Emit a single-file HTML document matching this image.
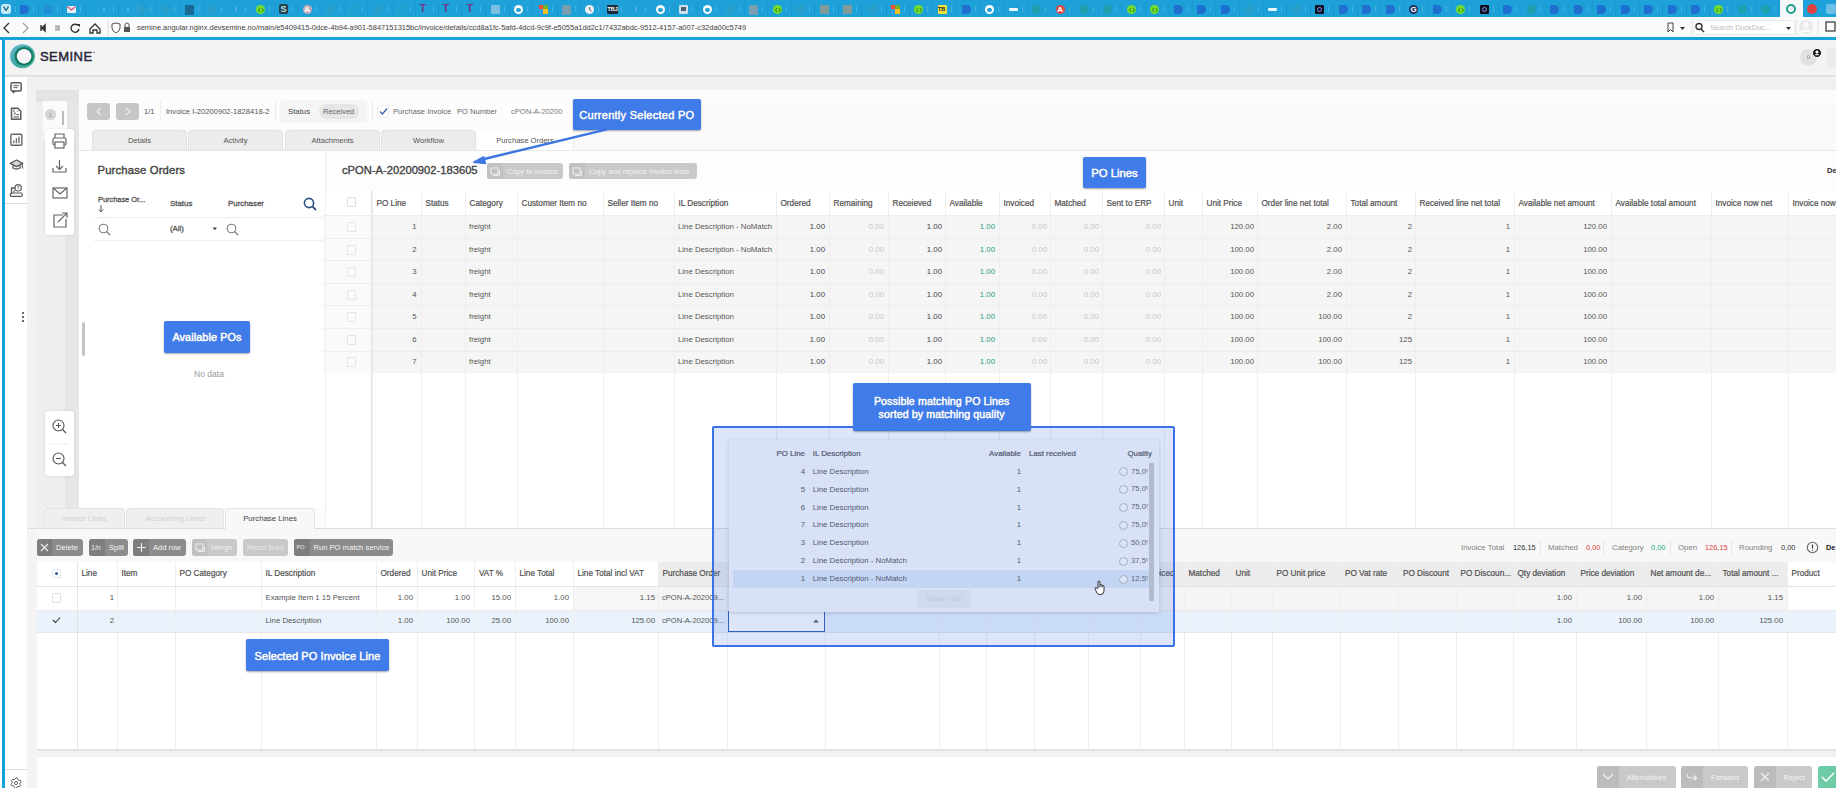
<!DOCTYPE html><html><head><meta charset="utf-8"><style>
*{margin:0;padding:0;box-sizing:border-box}
html,body{width:1836px;height:788px;overflow:hidden;background:#fff;font-family:"Liberation Sans",sans-serif;position:relative}
.a{position:absolute}
.t{position:absolute;white-space:nowrap;line-height:1;}
</style></head><body><div class="a" style="left:0px;top:0px;width:1836px;height:17px;background:#1ea0d8"></div>
<div class="a" style="left:1px;top:3.5px;width:10px;height:10px;background:#c5e9f8;border-radius:3px"><svg class="a" style="left:2px;top:2.5px" width="6" height="5"><path d="M0.5 0.5 L3 4.5 L5.5 0.5" stroke="#1a6f80" stroke-width="1.4" fill="none"/></svg></div>
<div class="a" style="left:15px;top:6px;width:1.3px;height:5.5px;background:#74c4e8;opacity:0.45"></div>
<div class="a" style="left:20px;top:1px;width:1px;height:15px;background:#1b92cc;opacity:0.5"></div>
<div class="a" style="left:19.5px;top:4.5px;width:9px;height:9px;background:#1f6fd0;border-radius:1px 5px 5px 1px;opacity:1"></div>
<div class="a" style="left:33px;top:6px;width:1.3px;height:5.5px;background:#74c4e8;opacity:0.45"></div>
<div class="a" style="left:38px;top:1px;width:1px;height:15px;background:#1b92cc;opacity:0.5"></div>
<div class="a" style="left:43.5px;top:4.5px;width:9px;height:9px;background:#1f6fd0;border-radius:1px 5px 5px 1px;opacity:0.35"></div>
<div class="a" style="left:57px;top:6px;width:1.3px;height:5.5px;background:#74c4e8;opacity:0.45"></div>
<div class="a" style="left:62px;top:1px;width:1px;height:15px;background:#1b92cc;opacity:0.5"></div>
<div class="a" style="left:66.5px;top:5.5px;width:9px;height:7px;background:#e8eef6;border-radius:1px"><svg class="a" style="left:0;top:0" width="9" height="7"><path d="M0.5 0.5 L4.5 4 L8.5 0.5" stroke="#d05070" stroke-width="1.2" fill="none"/></svg></div>
<div class="a" style="left:80px;top:6px;width:1.3px;height:5.5px;background:#74c4e8;opacity:0.45"></div>
<div class="a" style="left:85px;top:1px;width:1px;height:15px;background:#1b92cc;opacity:0.5"></div>
<div class="a" style="left:103px;top:6.5px;width:2px;height:5px;background:#6cc0e6;opacity:0.5"></div>
<div class="a" style="left:113px;top:6px;width:1.3px;height:5.5px;background:#74c4e8;opacity:0.45"></div>
<div class="a" style="left:118px;top:1px;width:1px;height:15px;background:#1b92cc;opacity:0.5"></div>
<div class="a" style="left:127px;top:6.5px;width:2px;height:5px;background:#6cc0e6;opacity:0.5"></div>
<div class="a" style="left:137px;top:6px;width:1.3px;height:5.5px;background:#74c4e8;opacity:0.45"></div>
<div class="a" style="left:142px;top:1px;width:1px;height:15px;background:#1b92cc;opacity:0.5"></div>
<div class="a" style="left:136.5px;top:4.5px;width:9px;height:9px;background:#3f9fb0;border-radius:50%;opacity:0.35"></div>
<div class="a" style="left:150px;top:6px;width:1.3px;height:5.5px;background:#74c4e8;opacity:0.45"></div>
<div class="a" style="left:155px;top:1px;width:1px;height:15px;background:#1b92cc;opacity:0.5"></div>
<div class="a" style="left:160.5px;top:4.5px;width:9px;height:9px;background:#3f9fb0;border-radius:50%;opacity:0.35"></div>
<div class="a" style="left:174px;top:6px;width:1.3px;height:5.5px;background:#74c4e8;opacity:0.45"></div>
<div class="a" style="left:179px;top:1px;width:1px;height:15px;background:#1b92cc;opacity:0.5"></div>
<div class="a" style="left:184.5px;top:4.5px;width:9px;height:10px;background:#16648c;border-radius:1px;opacity:0.9"></div>
<div class="a" style="left:198px;top:6px;width:1.3px;height:5.5px;background:#74c4e8;opacity:0.45"></div>
<div class="a" style="left:203px;top:1px;width:1px;height:15px;background:#1b92cc;opacity:0.5"></div>
<div class="a" style="left:207.5px;top:4.5px;width:9px;height:9px;background:#3f9fb0;border-radius:50%;opacity:0.35"></div>
<div class="a" style="left:221px;top:6px;width:1.3px;height:5.5px;background:#74c4e8;opacity:0.45"></div>
<div class="a" style="left:226px;top:1px;width:1px;height:15px;background:#1b92cc;opacity:0.5"></div>
<div class="a" style="left:235px;top:6.5px;width:2px;height:5px;background:#6cc0e6;opacity:0.5"></div>
<div class="a" style="left:245px;top:6px;width:1.3px;height:5.5px;background:#74c4e8;opacity:0.45"></div>
<div class="a" style="left:250px;top:1px;width:1px;height:15px;background:#1b92cc;opacity:0.5"></div>
<div class="a" style="left:255.5px;top:4.5px;width:9.5px;height:9.5px;background:#72dc2c;border-radius:50%"><svg class="a" style="left:2px;top:2px" width="6" height="6"><path d="M2 1 L0.5 3 L2 5 M4 1 L5.5 3 L4 5" stroke="#2a7a20" stroke-width="0.9" fill="none"/></svg></div>
<div class="a" style="left:269px;top:6px;width:1.3px;height:5.5px;background:#74c4e8;opacity:0.45"></div>
<div class="a" style="left:274px;top:1px;width:1px;height:15px;background:#1b92cc;opacity:0.5"></div>
<div class="a" style="left:278.5px;top:4.0px;width:9.5px;height:10px;background:#26404e;border-radius:2px"><div class="t" style="left:2px;top:1px;font-size:9px;font-weight:bold;color:#b8e8e0">S</div></div>
<div class="a" style="left:292px;top:6px;width:1.3px;height:5.5px;background:#74c4e8;opacity:0.45"></div>
<div class="a" style="left:297px;top:1px;width:1px;height:15px;background:#1b92cc;opacity:0.5"></div>
<div class="a" style="left:302.5px;top:4.5px;width:9.5px;height:9.5px;background:#c9a9b8;border-radius:50%"><div class="t" style="left:1.7px;top:1px;font-size:8px;font-weight:bold;color:#fff">A</div></div>
<div class="a" style="left:316px;top:6px;width:1.3px;height:5.5px;background:#74c4e8;opacity:0.45"></div>
<div class="a" style="left:321px;top:1px;width:1px;height:15px;background:#1b92cc;opacity:0.5"></div>
<div class="a" style="left:325.5px;top:4.5px;width:9px;height:9px;background:#3f9fb0;border-radius:50%;opacity:0.35"></div>
<div class="a" style="left:339px;top:6px;width:1.3px;height:5.5px;background:#74c4e8;opacity:0.45"></div>
<div class="a" style="left:344px;top:1px;width:1px;height:15px;background:#1b92cc;opacity:0.5"></div>
<div class="a" style="left:348.5px;top:4.5px;width:9px;height:9px;border:1.5px solid #40b8a0;border-radius:50%;opacity:0.45"></div>
<div class="a" style="left:362px;top:6px;width:1.3px;height:5.5px;background:#74c4e8;opacity:0.45"></div>
<div class="a" style="left:367px;top:1px;width:1px;height:15px;background:#1b92cc;opacity:0.5"></div>
<div class="a" style="left:373.5px;top:4.5px;width:9px;height:9px;background:#3f9fb0;border-radius:50%;opacity:0.35"></div>
<div class="a" style="left:387px;top:6px;width:1.3px;height:5.5px;background:#74c4e8;opacity:0.45"></div>
<div class="a" style="left:392px;top:1px;width:1px;height:15px;background:#1b92cc;opacity:0.5"></div>
<div class="a" style="left:396.5px;top:4.5px;width:9px;height:9px;border:1.5px solid #40b8a0;border-radius:50%;opacity:0.45"></div>
<div class="a" style="left:410px;top:6px;width:1.3px;height:5.5px;background:#74c4e8;opacity:0.45"></div>
<div class="a" style="left:415px;top:1px;width:1px;height:15px;background:#1b92cc;opacity:0.5"></div>
<div class="t" style="left:419.5px;top:3px;font-size:11px;font-weight:bold;color:#6a3a8a">T</div>
<div class="a" style="left:433px;top:6px;width:1.3px;height:5.5px;background:#74c4e8;opacity:0.45"></div>
<div class="a" style="left:438px;top:1px;width:1px;height:15px;background:#1b92cc;opacity:0.5"></div>
<div class="t" style="left:442.5px;top:3px;font-size:11px;font-weight:bold;color:#6a3a8a">T</div>
<div class="a" style="left:456px;top:6px;width:1.3px;height:5.5px;background:#74c4e8;opacity:0.45"></div>
<div class="a" style="left:461px;top:1px;width:1px;height:15px;background:#1b92cc;opacity:0.5"></div>
<div class="t" style="left:466.5px;top:3px;font-size:11px;font-weight:bold;color:#6a3a8a">T</div>
<div class="a" style="left:480px;top:6px;width:1.3px;height:5.5px;background:#74c4e8;opacity:0.45"></div>
<div class="a" style="left:485px;top:1px;width:1px;height:15px;background:#1b92cc;opacity:0.5"></div>
<div class="a" style="left:490.5px;top:4.5px;width:9px;height:9px;background:#b8d4e4;border-radius:1px;opacity:0.6"></div>
<div class="a" style="left:504px;top:6px;width:1.3px;height:5.5px;background:#74c4e8;opacity:0.45"></div>
<div class="a" style="left:509px;top:1px;width:1px;height:15px;background:#1b92cc;opacity:0.5"></div>
<div class="a" style="left:513.5px;top:4.5px;width:9.5px;height:9.5px;background:#fafafa;border-radius:50%"><div class="a" style="left:2.5px;top:3px;width:4.5px;height:4px;background:#1ea0d8;border-radius:50%"></div></div>
<div class="a" style="left:527px;top:6px;width:1.3px;height:5.5px;background:#74c4e8;opacity:0.45"></div>
<div class="a" style="left:532px;top:1px;width:1px;height:15px;background:#1b92cc;opacity:0.5"></div>
<div class="a" style="left:538.5px;top:4.5px;width:4.5px;height:4.5px;background:#f05030"></div>
<div class="a" style="left:543.0px;top:4.5px;width:4.5px;height:4.5px;background:#70b030"></div>
<div class="a" style="left:538.5px;top:9.0px;width:4.5px;height:4.5px;background:#30a0e0"></div>
<div class="a" style="left:543.0px;top:9.0px;width:4.5px;height:4.5px;background:#f8c020"></div>
<div class="a" style="left:552px;top:6px;width:1.3px;height:5.5px;background:#74c4e8;opacity:0.45"></div>
<div class="a" style="left:557px;top:1px;width:1px;height:15px;background:#1b92cc;opacity:0.5"></div>
<div class="a" style="left:561.5px;top:4.5px;width:9px;height:10px;background:#8c9ca8;border-radius:1px;opacity:0.8"></div>
<div class="a" style="left:575px;top:6px;width:1.3px;height:5.5px;background:#74c4e8;opacity:0.45"></div>
<div class="a" style="left:580px;top:1px;width:1px;height:15px;background:#1b92cc;opacity:0.5"></div>
<div class="a" style="left:584.5px;top:4.5px;width:9.5px;height:9.5px;background:#eef2f5;border-radius:50%"><svg class="a" style="left:0;top:0" width="9" height="9"><path d="M4.7 2 V4.7 L6.5 6" stroke="#445" stroke-width="0.9" fill="none"/></svg></div>
<div class="a" style="left:598px;top:6px;width:1.3px;height:5.5px;background:#74c4e8;opacity:0.45"></div>
<div class="a" style="left:603px;top:1px;width:1px;height:15px;background:#1b92cc;opacity:0.5"></div>
<div class="a" style="left:606.5px;top:4.5px;width:11px;height:9.5px;background:#1b2a3a;border-radius:1px"><div class="t" style="left:1px;top:2px;font-size:5.5px;font-weight:bold;color:#fff">TBJ</div></div>
<div class="a" style="left:621px;top:6px;width:1.3px;height:5.5px;background:#74c4e8;opacity:0.45"></div>
<div class="a" style="left:626px;top:1px;width:1px;height:15px;background:#1b92cc;opacity:0.5"></div>
<div class="a" style="left:635px;top:6.5px;width:2px;height:5px;background:#6cc0e6;opacity:0.5"></div>
<div class="a" style="left:645px;top:6px;width:1.3px;height:5.5px;background:#74c4e8;opacity:0.45"></div>
<div class="a" style="left:650px;top:1px;width:1px;height:15px;background:#1b92cc;opacity:0.5"></div>
<div class="a" style="left:655.5px;top:4.5px;width:9.5px;height:9.5px;background:#fafafa;border-radius:50%"><div class="a" style="left:2.5px;top:3px;width:4.5px;height:4px;background:#1ea0d8;border-radius:50%"></div></div>
<div class="a" style="left:669px;top:6px;width:1.3px;height:5.5px;background:#74c4e8;opacity:0.45"></div>
<div class="a" style="left:674px;top:1px;width:1px;height:15px;background:#1b92cc;opacity:0.5"></div>
<div class="a" style="left:678.5px;top:4.5px;width:9.5px;height:9px;background:#dfe8ef;border-radius:1px;opacity:0.9"><div class="a" style="left:2px;top:2px;width:5px;height:4px;background:#556"></div></div>
<div class="a" style="left:692px;top:6px;width:1.3px;height:5.5px;background:#74c4e8;opacity:0.45"></div>
<div class="a" style="left:697px;top:1px;width:1px;height:15px;background:#1b92cc;opacity:0.5"></div>
<div class="a" style="left:702.5px;top:4.5px;width:9.5px;height:9.5px;background:#fafafa;border-radius:50%"><div class="a" style="left:2.5px;top:3px;width:4.5px;height:4px;background:#1ea0d8;border-radius:50%"></div></div>
<div class="a" style="left:716px;top:6px;width:1.3px;height:5.5px;background:#74c4e8;opacity:0.45"></div>
<div class="a" style="left:721px;top:1px;width:1px;height:15px;background:#1b92cc;opacity:0.5"></div>
<div class="a" style="left:725.5px;top:4.5px;width:9px;height:9px;background:#3f9fb0;border-radius:50%;opacity:0.35"></div>
<div class="a" style="left:739px;top:6px;width:1.3px;height:5.5px;background:#74c4e8;opacity:0.45"></div>
<div class="a" style="left:744px;top:1px;width:1px;height:15px;background:#1b92cc;opacity:0.5"></div>
<div class="a" style="left:748.5px;top:4.5px;width:9px;height:10px;background:#8c9ca8;border-radius:1px;opacity:0.8"></div>
<div class="a" style="left:762px;top:6px;width:1.3px;height:5.5px;background:#74c4e8;opacity:0.45"></div>
<div class="a" style="left:767px;top:1px;width:1px;height:15px;background:#1b92cc;opacity:0.5"></div>
<div class="a" style="left:772.5px;top:4.5px;width:9.5px;height:9.5px;background:#72dc2c;border-radius:50%"><svg class="a" style="left:2px;top:2px" width="6" height="6"><path d="M2 1 L0.5 3 L2 5 M4 1 L5.5 3 L4 5" stroke="#2a7a20" stroke-width="0.9" fill="none"/></svg></div>
<div class="a" style="left:786px;top:6px;width:1.3px;height:5.5px;background:#74c4e8;opacity:0.45"></div>
<div class="a" style="left:791px;top:1px;width:1px;height:15px;background:#1b92cc;opacity:0.5"></div>
<div class="a" style="left:795.5px;top:4.5px;width:9px;height:9px;background:#3f9fb0;border-radius:50%;opacity:0.35"></div>
<div class="a" style="left:809px;top:6px;width:1.3px;height:5.5px;background:#74c4e8;opacity:0.45"></div>
<div class="a" style="left:814px;top:1px;width:1px;height:15px;background:#1b92cc;opacity:0.5"></div>
<div class="a" style="left:819.5px;top:4.5px;width:9px;height:9px;background:#a89a80;opacity:0.7"></div>
<div class="a" style="left:833px;top:6px;width:1.3px;height:5.5px;background:#74c4e8;opacity:0.45"></div>
<div class="a" style="left:838px;top:1px;width:1px;height:15px;background:#1b92cc;opacity:0.5"></div>
<div class="a" style="left:842.5px;top:4.5px;width:9px;height:9px;background:#a89a80;opacity:0.7"></div>
<div class="a" style="left:856px;top:6px;width:1.3px;height:5.5px;background:#74c4e8;opacity:0.45"></div>
<div class="a" style="left:861px;top:1px;width:1px;height:15px;background:#1b92cc;opacity:0.5"></div>
<div class="a" style="left:867.5px;top:4.5px;width:9px;height:9px;background:#3f9fb0;border-radius:50%;opacity:0.35"></div>
<div class="a" style="left:881px;top:6px;width:1.3px;height:5.5px;background:#74c4e8;opacity:0.45"></div>
<div class="a" style="left:886px;top:1px;width:1px;height:15px;background:#1b92cc;opacity:0.5"></div>
<div class="a" style="left:890.5px;top:4.5px;width:4.5px;height:4.5px;background:#f05030"></div>
<div class="a" style="left:895.0px;top:4.5px;width:4.5px;height:4.5px;background:#70b030"></div>
<div class="a" style="left:890.5px;top:9.0px;width:4.5px;height:4.5px;background:#30a0e0"></div>
<div class="a" style="left:895.0px;top:9.0px;width:4.5px;height:4.5px;background:#f8c020"></div>
<div class="a" style="left:904px;top:6px;width:1.3px;height:5.5px;background:#74c4e8;opacity:0.45"></div>
<div class="a" style="left:909px;top:1px;width:1px;height:15px;background:#1b92cc;opacity:0.5"></div>
<div class="a" style="left:913.5px;top:4.5px;width:9.5px;height:9.5px;background:#72dc2c;border-radius:50%"><svg class="a" style="left:2px;top:2px" width="6" height="6"><path d="M2 1 L0.5 3 L2 5 M4 1 L5.5 3 L4 5" stroke="#2a7a20" stroke-width="0.9" fill="none"/></svg></div>
<div class="a" style="left:927px;top:6px;width:1.3px;height:5.5px;background:#74c4e8;opacity:0.45"></div>
<div class="a" style="left:932px;top:1px;width:1px;height:15px;background:#1b92cc;opacity:0.5"></div>
<div class="a" style="left:937.5px;top:4.5px;width:9.5px;height:9.5px;background:#f0e040;border-radius:1px"><div class="t" style="left:0.5px;top:2.5px;font-size:5.5px;font-weight:bold;color:#222">TB</div></div>
<div class="a" style="left:951px;top:6px;width:1.3px;height:5.5px;background:#74c4e8;opacity:0.45"></div>
<div class="a" style="left:956px;top:1px;width:1px;height:15px;background:#1b92cc;opacity:0.5"></div>
<div class="a" style="left:961.5px;top:4.5px;width:9px;height:9px;background:#1f6fd0;border-radius:1px 5px 5px 1px;opacity:1"></div>
<div class="a" style="left:975px;top:6px;width:1.3px;height:5.5px;background:#74c4e8;opacity:0.45"></div>
<div class="a" style="left:980px;top:1px;width:1px;height:15px;background:#1b92cc;opacity:0.5"></div>
<div class="a" style="left:984.5px;top:4.5px;width:9.5px;height:9.5px;background:#fafafa;border-radius:50%"><div class="a" style="left:2.5px;top:3px;width:4.5px;height:4px;background:#1ea0d8;border-radius:50%"></div></div>
<div class="a" style="left:998px;top:6px;width:1.3px;height:5.5px;background:#74c4e8;opacity:0.45"></div>
<div class="a" style="left:1003px;top:1px;width:1px;height:15px;background:#1b92cc;opacity:0.5"></div>
<div class="a" style="left:1008.5px;top:7.5px;width:9.5px;height:3.5px;background:#eaf8ff;border-radius:1px"></div>
<div class="a" style="left:1022px;top:6px;width:1.3px;height:5.5px;background:#74c4e8;opacity:0.45"></div>
<div class="a" style="left:1027px;top:1px;width:1px;height:15px;background:#1b92cc;opacity:0.5"></div>
<div class="a" style="left:1031.5px;top:4.5px;width:9px;height:9px;background:#1fa08a;border-radius:50%;opacity:0.55"></div>
<div class="a" style="left:1045px;top:6px;width:1.3px;height:5.5px;background:#74c4e8;opacity:0.45"></div>
<div class="a" style="left:1050px;top:1px;width:1px;height:15px;background:#1b92cc;opacity:0.5"></div>
<div class="a" style="left:1055.5px;top:4.5px;width:9.5px;height:9.5px;background:#e04848;border-radius:50%"><div class="t" style="left:1.7px;top:1px;font-size:8px;font-weight:bold;color:#fff">A</div></div>
<div class="a" style="left:1069px;top:6px;width:1.3px;height:5.5px;background:#74c4e8;opacity:0.45"></div>
<div class="a" style="left:1074px;top:1px;width:1px;height:15px;background:#1b92cc;opacity:0.5"></div>
<div class="a" style="left:1079.5px;top:4.5px;width:9px;height:9px;background:#1fa08a;border-radius:50%;opacity:0.55"></div>
<div class="a" style="left:1093px;top:6px;width:1.3px;height:5.5px;background:#74c4e8;opacity:0.45"></div>
<div class="a" style="left:1098px;top:1px;width:1px;height:15px;background:#1b92cc;opacity:0.5"></div>
<div class="a" style="left:1102.5px;top:4.5px;width:9px;height:9px;background:#1fa08a;border-radius:50%;opacity:0.55"></div>
<div class="a" style="left:1116px;top:6px;width:1.3px;height:5.5px;background:#74c4e8;opacity:0.45"></div>
<div class="a" style="left:1121px;top:1px;width:1px;height:15px;background:#1b92cc;opacity:0.5"></div>
<div class="a" style="left:1126.5px;top:4.5px;width:9.5px;height:9.5px;background:#72dc2c;border-radius:50%"><svg class="a" style="left:2px;top:2px" width="6" height="6"><path d="M2 1 L0.5 3 L2 5 M4 1 L5.5 3 L4 5" stroke="#2a7a20" stroke-width="0.9" fill="none"/></svg></div>
<div class="a" style="left:1140px;top:6px;width:1.3px;height:5.5px;background:#74c4e8;opacity:0.45"></div>
<div class="a" style="left:1145px;top:1px;width:1px;height:15px;background:#1b92cc;opacity:0.5"></div>
<div class="a" style="left:1149.5px;top:4.5px;width:9.5px;height:9.5px;background:#72dc2c;border-radius:50%"><svg class="a" style="left:2px;top:2px" width="6" height="6"><path d="M2 1 L0.5 3 L2 5 M4 1 L5.5 3 L4 5" stroke="#2a7a20" stroke-width="0.9" fill="none"/></svg></div>
<div class="a" style="left:1163px;top:6px;width:1.3px;height:5.5px;background:#74c4e8;opacity:0.45"></div>
<div class="a" style="left:1168px;top:1px;width:1px;height:15px;background:#1b92cc;opacity:0.5"></div>
<div class="a" style="left:1173.5px;top:4.5px;width:9px;height:9px;background:#1f6fd0;border-radius:1px 5px 5px 1px;opacity:1"></div>
<div class="a" style="left:1187px;top:6px;width:1.3px;height:5.5px;background:#74c4e8;opacity:0.45"></div>
<div class="a" style="left:1192px;top:1px;width:1px;height:15px;background:#1b92cc;opacity:0.5"></div>
<div class="a" style="left:1196.5px;top:4.5px;width:9px;height:9px;background:#1f6fd0;border-radius:1px 5px 5px 1px;opacity:1"></div>
<div class="a" style="left:1210px;top:6px;width:1.3px;height:5.5px;background:#74c4e8;opacity:0.45"></div>
<div class="a" style="left:1215px;top:1px;width:1px;height:15px;background:#1b92cc;opacity:0.5"></div>
<div class="a" style="left:1220.5px;top:4.5px;width:9px;height:9px;background:#1f6fd0;border-radius:1px 5px 5px 1px;opacity:1"></div>
<div class="a" style="left:1234px;top:6px;width:1.3px;height:5.5px;background:#74c4e8;opacity:0.45"></div>
<div class="a" style="left:1239px;top:1px;width:1px;height:15px;background:#1b92cc;opacity:0.5"></div>
<div class="a" style="left:1244.5px;top:4.5px;width:9px;height:9px;background:#3f9fb0;border-radius:50%;opacity:0.35"></div>
<div class="a" style="left:1258px;top:6px;width:1.3px;height:5.5px;background:#74c4e8;opacity:0.45"></div>
<div class="a" style="left:1263px;top:1px;width:1px;height:15px;background:#1b92cc;opacity:0.5"></div>
<div class="a" style="left:1267.5px;top:7.5px;width:9.5px;height:3.5px;background:#eaf8ff;border-radius:1px"></div>
<div class="a" style="left:1281px;top:6px;width:1.3px;height:5.5px;background:#74c4e8;opacity:0.45"></div>
<div class="a" style="left:1286px;top:1px;width:1px;height:15px;background:#1b92cc;opacity:0.5"></div>
<div class="a" style="left:1291.5px;top:4.5px;width:9px;height:9px;background:#3f9fb0;border-radius:50%;opacity:0.35"></div>
<div class="a" style="left:1305px;top:6px;width:1.3px;height:5.5px;background:#74c4e8;opacity:0.45"></div>
<div class="a" style="left:1310px;top:1px;width:1px;height:15px;background:#1b92cc;opacity:0.5"></div>
<div class="a" style="left:1314.5px;top:4.5px;width:9.5px;height:9.5px;background:#101020;border-radius:1px"><div class="a" style="left:2px;top:2px;width:5.5px;height:5.5px;border:1.3px solid #7a9af0;border-radius:50%"></div></div>
<div class="a" style="left:1328px;top:6px;width:1.3px;height:5.5px;background:#74c4e8;opacity:0.45"></div>
<div class="a" style="left:1333px;top:1px;width:1px;height:15px;background:#1b92cc;opacity:0.5"></div>
<div class="a" style="left:1338.5px;top:4.5px;width:9px;height:9px;background:#1f6fd0;border-radius:1px 5px 5px 1px;opacity:1"></div>
<div class="a" style="left:1352px;top:6px;width:1.3px;height:5.5px;background:#74c4e8;opacity:0.45"></div>
<div class="a" style="left:1357px;top:1px;width:1px;height:15px;background:#1b92cc;opacity:0.5"></div>
<div class="a" style="left:1361.5px;top:4.5px;width:9px;height:9px;background:#1f6fd0;border-radius:1px 5px 5px 1px;opacity:1"></div>
<div class="a" style="left:1375px;top:6px;width:1.3px;height:5.5px;background:#74c4e8;opacity:0.45"></div>
<div class="a" style="left:1380px;top:1px;width:1px;height:15px;background:#1b92cc;opacity:0.5"></div>
<div class="a" style="left:1385.5px;top:4.5px;width:9px;height:9px;background:#1f6fd0;border-radius:1px 5px 5px 1px;opacity:1"></div>
<div class="a" style="left:1399px;top:6px;width:1.3px;height:5.5px;background:#74c4e8;opacity:0.45"></div>
<div class="a" style="left:1404px;top:1px;width:1px;height:15px;background:#1b92cc;opacity:0.5"></div>
<div class="a" style="left:1408.5px;top:4.5px;width:9.5px;height:9.5px;background:#1d3060;border-radius:50%"><div class="t" style="left:2px;top:1px;font-size:8px;font-weight:bold;color:#fff">G</div></div>
<div class="a" style="left:1422px;top:6px;width:1.3px;height:5.5px;background:#74c4e8;opacity:0.45"></div>
<div class="a" style="left:1427px;top:1px;width:1px;height:15px;background:#1b92cc;opacity:0.5"></div>
<div class="a" style="left:1432.5px;top:4.5px;width:9px;height:9px;background:#1f6fd0;border-radius:1px 5px 5px 1px;opacity:1"></div>
<div class="a" style="left:1446px;top:6px;width:1.3px;height:5.5px;background:#74c4e8;opacity:0.45"></div>
<div class="a" style="left:1451px;top:1px;width:1px;height:15px;background:#1b92cc;opacity:0.5"></div>
<div class="a" style="left:1455.5px;top:4.5px;width:9.5px;height:9.5px;background:#72dc2c;border-radius:50%"><svg class="a" style="left:2px;top:2px" width="6" height="6"><path d="M2 1 L0.5 3 L2 5 M4 1 L5.5 3 L4 5" stroke="#2a7a20" stroke-width="0.9" fill="none"/></svg></div>
<div class="a" style="left:1469px;top:6px;width:1.3px;height:5.5px;background:#74c4e8;opacity:0.45"></div>
<div class="a" style="left:1474px;top:1px;width:1px;height:15px;background:#1b92cc;opacity:0.5"></div>
<div class="a" style="left:1479.5px;top:4.5px;width:9.5px;height:9.5px;background:#101020;border-radius:1px"><div class="a" style="left:2px;top:2px;width:5.5px;height:5.5px;border:1.3px solid #7a9af0;border-radius:50%"></div></div>
<div class="a" style="left:1493px;top:6px;width:1.3px;height:5.5px;background:#74c4e8;opacity:0.45"></div>
<div class="a" style="left:1498px;top:1px;width:1px;height:15px;background:#1b92cc;opacity:0.5"></div>
<div class="a" style="left:1502.5px;top:4.5px;width:9px;height:9px;background:#1f6fd0;border-radius:1px 5px 5px 1px;opacity:1"></div>
<div class="a" style="left:1516px;top:6px;width:1.3px;height:5.5px;background:#74c4e8;opacity:0.45"></div>
<div class="a" style="left:1521px;top:1px;width:1px;height:15px;background:#1b92cc;opacity:0.5"></div>
<div class="a" style="left:1526.5px;top:4.5px;width:9px;height:9px;background:#1fa08a;border-radius:50%;opacity:0.55"></div>
<div class="a" style="left:1540px;top:6px;width:1.3px;height:5.5px;background:#74c4e8;opacity:0.45"></div>
<div class="a" style="left:1545px;top:1px;width:1px;height:15px;background:#1b92cc;opacity:0.5"></div>
<div class="a" style="left:1549.5px;top:4.5px;width:9px;height:9px;background:#1f6fd0;border-radius:1px 5px 5px 1px;opacity:1"></div>
<div class="a" style="left:1563px;top:6px;width:1.3px;height:5.5px;background:#74c4e8;opacity:0.45"></div>
<div class="a" style="left:1568px;top:1px;width:1px;height:15px;background:#1b92cc;opacity:0.5"></div>
<div class="a" style="left:1573.5px;top:4.5px;width:9px;height:9px;background:#1f6fd0;border-radius:1px 5px 5px 1px;opacity:1"></div>
<div class="a" style="left:1587px;top:6px;width:1.3px;height:5.5px;background:#74c4e8;opacity:0.45"></div>
<div class="a" style="left:1592px;top:1px;width:1px;height:15px;background:#1b92cc;opacity:0.5"></div>
<div class="a" style="left:1596.5px;top:4.5px;width:9px;height:9px;background:#1f6fd0;border-radius:1px 5px 5px 1px;opacity:1"></div>
<div class="a" style="left:1610px;top:6px;width:1.3px;height:5.5px;background:#74c4e8;opacity:0.45"></div>
<div class="a" style="left:1615px;top:1px;width:1px;height:15px;background:#1b92cc;opacity:0.5"></div>
<div class="a" style="left:1620.5px;top:4.5px;width:9px;height:9px;background:#1f6fd0;border-radius:1px 5px 5px 1px;opacity:1"></div>
<div class="a" style="left:1634px;top:6px;width:1.3px;height:5.5px;background:#74c4e8;opacity:0.45"></div>
<div class="a" style="left:1639px;top:1px;width:1px;height:15px;background:#1b92cc;opacity:0.5"></div>
<div class="a" style="left:1643.5px;top:4.5px;width:9px;height:9px;background:#1f6fd0;border-radius:1px 5px 5px 1px;opacity:1"></div>
<div class="a" style="left:1657px;top:6px;width:1.3px;height:5.5px;background:#74c4e8;opacity:0.45"></div>
<div class="a" style="left:1662px;top:1px;width:1px;height:15px;background:#1b92cc;opacity:0.5"></div>
<div class="a" style="left:1667.5px;top:4.5px;width:9px;height:9px;background:#1f6fd0;border-radius:1px 5px 5px 1px;opacity:1"></div>
<div class="a" style="left:1681px;top:6px;width:1.3px;height:5.5px;background:#74c4e8;opacity:0.45"></div>
<div class="a" style="left:1686px;top:1px;width:1px;height:15px;background:#1b92cc;opacity:0.5"></div>
<div class="a" style="left:1690.5px;top:4.5px;width:9px;height:9px;background:#1f6fd0;border-radius:1px 5px 5px 1px;opacity:1"></div>
<div class="a" style="left:1704px;top:6px;width:1.3px;height:5.5px;background:#74c4e8;opacity:0.45"></div>
<div class="a" style="left:1709px;top:1px;width:1px;height:15px;background:#1b92cc;opacity:0.5"></div>
<div class="a" style="left:1713.5px;top:4.5px;width:9.5px;height:9.5px;background:#72dc2c;border-radius:50%"><svg class="a" style="left:2px;top:2px" width="6" height="6"><path d="M2 1 L0.5 3 L2 5 M4 1 L5.5 3 L4 5" stroke="#2a7a20" stroke-width="0.9" fill="none"/></svg></div>
<div class="a" style="left:1727px;top:6px;width:1.3px;height:5.5px;background:#74c4e8;opacity:0.45"></div>
<div class="a" style="left:1732px;top:1px;width:1px;height:15px;background:#1b92cc;opacity:0.5"></div>
<div class="a" style="left:1737.5px;top:4.5px;width:9px;height:9px;background:#1fa08a;border-radius:50%;opacity:0.55"></div>
<div class="a" style="left:1751px;top:6px;width:1.3px;height:5.5px;background:#74c4e8;opacity:0.45"></div>
<div class="a" style="left:1756px;top:1px;width:1px;height:15px;background:#1b92cc;opacity:0.5"></div>
<div class="a" style="left:1760.5px;top:4.5px;width:9px;height:9px;background:#1fa08a;border-radius:50%;opacity:0.55"></div>
<div class="a" style="left:1774px;top:6px;width:1.3px;height:5.5px;background:#74c4e8;opacity:0.45"></div>
<div class="a" style="left:1779px;top:1px;width:1px;height:15px;background:#1b92cc;opacity:0.5"></div>
<div class="a" style="left:1780px;top:0px;width:23px;height:17px;background:#f5f7f8"></div>
<div class="a" style="left:1786px;top:4px;width:10px;height:10px;border:2px solid #1f9f8f;border-radius:50%"></div>
<div class="a" style="left:1807px;top:4px;width:10px;height:10px;background:#e04040;border-radius:50%"></div>
<div class="a" style="left:1826px;top:4px;width:10px;height:10px;background:#6fc0e8;border-radius:2px"></div>
<div class="a" style="left:0px;top:17px;width:1836px;height:20px;background:#fbfafa"></div>
<div class="a" style="left:0px;top:37px;width:1836px;height:3px;background:#18a2da"></div>
<div class="a" style="left:2px;top:37px;width:3px;height:751px;background:#18a2da"></div>
<div class="a" style="left:5px;top:40px;width:1px;height:748px;background:#c8f4fa"></div>
<svg class="a" style="left:0px;top:17px;" width="135" height="20" viewBox="0 0 135 20"><path d="M9 6 L4 11 L9 16" stroke="#333" stroke-width="1.3" fill="none"/><path d="M23 6 L28 11 L23 16" stroke="#999" stroke-width="1.1" fill="none"/><path d="M41 8 V14 M45 8 L42 11 L45 14 Z" stroke="#333" stroke-width="1.5" fill="#333"/><path d="M56 8 V14 M59 8 V14 M57 9 L59 11 L57 13" stroke="#999" stroke-width="1.2" fill="none"/><path d="M78 8.5 A4 4 0 1 0 79 12" stroke="#333" stroke-width="1.4" fill="none"/><path d="M76 7 L80 7 L80 10 Z" fill="#333"/><path d="M90 12 L95 7 L100 12 V16 H97 V13 H93 V16 H90 Z" stroke="#333" stroke-width="1.3" fill="none"/><line x1="108" y1="3" x2="108" y2="19" stroke="#ddd"/><path d="M112 7 L116 6 L120 7 V11 Q120 14 116 16 Q112 14 112 11 Z" stroke="#555" stroke-width="1" fill="none"/><rect x="124" y="10" width="6" height="5" fill="#555"/><path d="M125 10 V8 A2 2 0 0 1 129 8 V10" stroke="#555" fill="none"/></svg>
<div class="t" style="left:137px;top:23.77px;font-size:7.46px;color:#444">semine.angular.nginx.devsemine.no/main/e5409415-0dce-4b94-a901-5847151315bc/invoice/details/ccd8a1fc-5afd-4dcd-9c9f-e5055a1dd2c1/7432abdc-9512-4157-a007-c32da00c5749</div>
<svg class="a" style="left:1660px;top:17px;" width="176" height="20" viewBox="0 0 176 20"><path d="M8 6 H13 V15 L10.5 12.5 L8 15 Z" stroke="#444" stroke-width="1" fill="none"/><path d="M20 10 L25 10 L22.5 13 Z" fill="#333"/><line x1="32" y1="2" x2="32" y2="18" stroke="#e0e0e0"/><circle cx="39" cy="9.5" r="3" stroke="#333" stroke-width="1.4" fill="none"/><line x1="41" y1="12" x2="44" y2="15" stroke="#333" stroke-width="1.5"/><path d="M126 10 L131 10 L128.5 13 Z" fill="#333"/><line x1="136" y1="2" x2="136" y2="18" stroke="#e0e0e0"/><circle cx="146" cy="10" r="7" fill="#e8e8e8"/><circle cx="146" cy="8" r="3" fill="#fafafa"/><path d="M140 15 Q146 9 152 15" fill="#fafafa"/><line x1="158" y1="3" x2="158" y2="17" stroke="#ddd"/><rect x="166" y="5" width="9" height="9" stroke="#333" stroke-width="1.2" fill="none"/></svg>
<div class="a" style="left:1694px;top:20px;width:101px;height:15px;background:#fff;border:1px solid #ececec;border-radius:2px"></div>
<svg class="a" style="left:1660px;top:17px;" width="176" height="20" viewBox="0 0 176 20"><circle cx="39" cy="9.5" r="3" stroke="#333" stroke-width="1.4" fill="none"/><line x1="41" y1="12" x2="44" y2="15" stroke="#333" stroke-width="1.5"/><path d="M126 10 L131 10 L128.5 13 Z" fill="#333"/></svg>
<div class="t" style="left:1710px;top:23.85px;font-size:7.3px;color:#bbb">Search DuckDuc...</div>
<div class="a" style="left:5px;top:40px;width:1831px;height:36px;background:#f3f3f3"></div>
<div class="a" style="left:5px;top:75px;width:1831px;height:2px;background:linear-gradient(#d6d6d6,#ebebeb)"></div>
<svg class="a" style="left:8px;top:43px;" width="30" height="28" viewBox="0 0 30 28"><defs><linearGradient id="lg" x1="0" y1="0" x2="1" y2="1"><stop offset="0" stop-color="#62b4d4"/><stop offset="0.55" stop-color="#2c9a9a"/><stop offset="1" stop-color="#48bb82"/></linearGradient></defs><ellipse cx="14.5" cy="13.3" rx="12.5" ry="12" fill="url(#lg)" opacity="0.9"/><circle cx="16" cy="13.4" r="9.6" fill="#138266"/><circle cx="16" cy="13.4" r="8.2" fill="#0f6d5c"/><circle cx="16.1" cy="13.4" r="7.3" fill="#f7f5f8"/></svg>
<div class="a" style="left:92.5px;top:52px;width:2.5px;height:1px;background:#888"></div>
<div class="t" style="left:40px;top:49.70px;font-size:13px;color:#2a2438;letter-spacing:0.45px;-webkit-text-stroke:0.45px #2a2438">SEMINE</div>
<div class="a" style="left:1834px;top:51px;width:2px;height:2px;background:#999"></div>
<div class="a" style="left:1800px;top:49px;width:17px;height:17px;background:#e2e2e2;border-radius:50%"></div>
<div class="a" style="left:1807px;top:55px;width:3px;height:4px;border:1px solid #aaa;border-radius:1px"></div>
<div class="a" style="left:1812px;top:48px;width:10px;height:10px;background:#111;border-radius:50%;border:1px solid #fff"></div>
<svg class="a" style="left:1813px;top:49px;" width="8" height="8" viewBox="0 0 8 8"><circle cx="4" cy="3" r="1.6" fill="#fff"/><path d="M1.2 6.3 Q4 3.8 6.8 6.3 Z" fill="#fff"/></svg>
<div class="a" style="left:1826px;top:47px;width:10px;height:20px;background:#ececec;border-radius:2px"></div>
<div class="a" style="left:5px;top:77px;width:22px;height:711px;background:#fff"></div>
<div class="a" style="left:27px;top:77px;width:1809px;height:711px;background:#f2f2f2"></div>
<svg class="a" style="left:5px;top:77px;" width="22" height="122" viewBox="0 0 22 122"><rect x="6" y="5.7" width="10.2" height="8.2" rx="1.5" stroke="#5a5a5a" stroke-width="1.5" fill="none"/><path d="M7.5 13.9 L8.5 15.8 L10.5 13.9" stroke="#5a5a5a" stroke-width="1.3" fill="none"/><line x1="8.5" y1="8.6" x2="13.8" y2="8.6" stroke="#666" stroke-width="1.1"/><line x1="8.5" y1="10.6" x2="12.5" y2="10.6" stroke="#666" stroke-width="1.1"/><path d="M6.5 31.2 H12.8 L15.8 34.2 V42.2 H6.5 Z" stroke="#5a5a5a" stroke-width="1.5" fill="none" stroke-linejoin="round"/><line x1="8.5" y1="40" x2="13.8" y2="40" stroke="#5a5a5a" stroke-width="1.2"/><path d="M10 32.8 Q8.4 32.8 8.6 34.3 Q8.9 35.3 10 35.5 Q11.2 35.9 10 37.3 H8.6" stroke="#5a5a5a" stroke-width="0.9" fill="none"/><line x1="11.2" y1="37.6" x2="14" y2="37.6" stroke="#5a5a5a" stroke-width="1"/><line x1="11.5" y1="34" x2="13.5" y2="34" stroke="#777" stroke-width="0.8"/><rect x="5.9" y="57.3" width="11" height="11" rx="1" stroke="#666" stroke-width="1.4" fill="none"/><path d="M8.8 66.3 V63.5 M11.4 66.3 V61.3 M14 66.3 V59.8" stroke="#666" stroke-width="1.3"/><path d="M5.2 86.3 L11.5 83 L17.8 86.3 L11.5 89.6 Z" stroke="#5a5a5a" stroke-width="1.4" fill="#d8d8d8" stroke-linejoin="round"/><path d="M8 88.2 V91 Q11.5 93 15 91 V88.2" stroke="#5a5a5a" stroke-width="1.3" fill="none"/><path d="M17.3 86.6 V90.5 L18 91.5" stroke="#5a5a5a" stroke-width="1.1" fill="none"/><path d="M6.5 117 V111 H10" stroke="#5a5a5a" stroke-width="1.3" fill="none"/><rect x="5.3" y="116" width="12" height="3.4" rx="1.2" stroke="#5a5a5a" stroke-width="1.2" fill="none"/><circle cx="13.2" cy="110.8" r="3.2" stroke="#5a5a5a" stroke-width="1.2" fill="#fff"/><path d="M12.3 109.8 Q13.2 108.5 14.1 109.8 Q14.1 110.6 13.2 111.1 V112" stroke="#5a5a5a" stroke-width="0.8" fill="none"/><line x1="9" y1="113" x2="9" y2="115.5" stroke="#5a5a5a" stroke-width="1"/></svg>
<div class="a" style="left:5px;top:203px;width:22px;height:1px;background:#ddd"></div>
<div class="a" style="left:5px;top:769px;width:22px;height:1px;background:#ddd"></div>
<svg class="a" style="left:10.3px;top:777px;" width="12" height="12" viewBox="0 0 12 12"><path d="M6.00 0.70 L7.37 0.88 L7.95 2.62 L8.76 3.24 L10.59 3.35 L11.12 4.63 L9.90 6.00 L9.77 7.01 L10.59 8.65 L9.75 9.75 L7.95 9.38 L7.01 9.77 L6.00 11.30 L4.63 11.12 L4.05 9.38 L3.24 8.76 L1.41 8.65 L0.88 7.37 L2.10 6.00 L2.23 4.99 L1.41 3.35 L2.25 2.25 L4.05 2.62 L4.99 2.23 Z" stroke="#666" stroke-width="1" fill="none" stroke-linejoin="round"/><circle cx="6" cy="6" r="1.6" stroke="#666" fill="none"/></svg>
<div class="a" style="left:27px;top:77px;width:1809px;height:13px;background:#f0f0f0"></div>
<div class="a" style="left:36px;top:90px;width:43px;height:438px;background:#efefef"></div>
<div class="a" style="left:36px;top:90px;width:43px;height:12px;background:#e3e3e3"></div>
<div class="a" style="left:65px;top:102px;width:14px;height:426px;background:#e6e6e6"></div>
<div class="a" style="left:43px;top:101px;width:24px;height:40px;background:#fbfbfb"></div>
<div class="a" style="left:45px;top:109px;width:11px;height:11px;background:#d4d4d4;border-radius:50%"><div class="t" style="left:3.5px;top:2.5px;font-size:6px;color:#999">1</div></div>
<div class="a" style="left:62px;top:111px;width:1.5px;height:14px;background:#bbb"></div>
<div class="a" style="left:79px;top:90px;width:1757px;height:438px;background:#fcfcfc"></div>
<div class="a" style="left:45px;top:129px;width:29px;height:106px;background:#fff;border-radius:3px;box-shadow:0 0 3px rgba(0,0,0,0.12)"></div>
<svg class="a" style="left:45px;top:129px;" width="29" height="106" viewBox="0 0 29 106"><rect x="8" y="9" width="13" height="7" rx="1.5" stroke="#666" stroke-width="1.2" fill="none"/><path d="M10 9 V5 H19 V9" stroke="#666" stroke-width="1.2" fill="none"/><rect x="10" y="13" width="9" height="6" stroke="#666" stroke-width="1.2" fill="#fff"/><path d="M14.5 31 V40 M11 37 L14.5 40.5 L18 37" stroke="#666" stroke-width="1.2" fill="none"/><path d="M8 39 V43 H21 V39" stroke="#666" stroke-width="1.2" fill="none"/><rect x="8" y="59" width="14" height="10" stroke="#666" stroke-width="1.2" fill="none"/><path d="M8 59 L15 65 L22 59" stroke="#666" stroke-width="1.2" fill="none"/><path d="M18 86 H9 V98 H21 V90" stroke="#666" stroke-width="1.2" fill="none"/><path d="M13 93 L22 84 M17 84 H22 V89" stroke="#666" stroke-width="1.2" fill="none"/></svg>
<div class="a" style="left:87px;top:103px;width:23px;height:17px;background:#c6c6c6;border-radius:3px"></div>
<div class="a" style="left:116px;top:103px;width:23px;height:17px;background:#c6c6c6;border-radius:3px"></div>
<svg class="a" style="left:87px;top:103px;" width="52" height="17" viewBox="0 0 52 17"><path d="M14 5 L10 8.5 L14 12" stroke="#eee" stroke-width="1.1" fill="none"/><path d="M39 5 L43 8.5 L39 12" stroke="#eee" stroke-width="1.1" fill="none"/></svg>
<div class="t" style="left:144px;top:107.75px;font-size:7.5px;color:#555">1/1</div>
<div class="a" style="left:160px;top:100px;width:1px;height:22px;background:#eee"></div>
<div class="t" style="left:166px;top:107.70px;font-size:7.6px;color:#555">Invoice I-20200902-1828418-2</div>
<div class="a" style="left:275px;top:100px;width:1px;height:22px;background:#eee"></div>
<div class="a" style="left:280px;top:100px;width:87px;height:23px;background:#f5f5f5;border-radius:3px"></div>
<div class="t" style="left:288px;top:107.60px;font-size:7.8px;color:#444">Status</div>
<div class="a" style="left:318.5px;top:104px;width:40.5px;height:15px;background:#e6e6e6;border-radius:8px"></div>
<div class="t" style="left:323px;top:107.75px;font-size:7.5px;color:#666">Received</div>
<div class="a" style="left:372px;top:100px;width:1px;height:22px;background:#eee"></div>
<div class="a" style="left:377px;top:105px;width:12px;height:13px;background:#fff;border:1px solid #eee;border-radius:2px"></div>
<svg class="a" style="left:377px;top:105px;" width="12" height="13" viewBox="0 0 12 13"><path d="M3 6.5 L5.5 9 L10 3.5" stroke="#3a5fa8" stroke-width="1.2" fill="none"/></svg>
<div class="t" style="left:393px;top:107.70px;font-size:7.6px;color:#666">Purchase Invoice</div>
<div class="t" style="left:457px;top:107.70px;font-size:7.6px;color:#666">PO Number</div>
<div class="a" style="left:506px;top:103px;width:59px;height:17px;background:#fff;border-radius:2px;overflow:hidden"><div class="t" style="left:5px;top:4.5px;font-size:7.6px;color:#777">cPON-A-20200</div></div>
<div class="a" style="left:92px;top:130px;width:95px;height:20px;background:#ececec;border:1px solid #e2e2e2;border-bottom:none;border-radius:4px 4px 0 0"></div>
<div class="t" style="left:-160.5px;width:600px;text-align:center;top:136.70px;font-size:7.6px;color:#555">Details</div>
<div class="a" style="left:188px;top:130px;width:95px;height:20px;background:#ececec;border:1px solid #e2e2e2;border-bottom:none;border-radius:4px 4px 0 0"></div>
<div class="t" style="left:-64.5px;width:600px;text-align:center;top:136.70px;font-size:7.6px;color:#555">Activity</div>
<div class="a" style="left:285px;top:130px;width:95px;height:20px;background:#ececec;border:1px solid #e2e2e2;border-bottom:none;border-radius:4px 4px 0 0"></div>
<div class="t" style="left:32.5px;width:600px;text-align:center;top:136.70px;font-size:7.6px;color:#555">Attachments</div>
<div class="a" style="left:381px;top:130px;width:95px;height:20px;background:#ececec;border:1px solid #e2e2e2;border-bottom:none;border-radius:4px 4px 0 0"></div>
<div class="t" style="left:128.5px;width:600px;text-align:center;top:136.70px;font-size:7.6px;color:#555">Workflow</div>
<div class="a" style="left:478px;top:130px;width:94px;height:21px;background:#fff;border-radius:4px 4px 0 0"></div>
<div class="t" style="left:225.0px;width:600px;text-align:center;top:136.70px;font-size:7.6px;color:#555">Purchase Orders</div>
<div class="a" style="left:573px;top:104px;width:1263px;height:47px;background:#fafafa;border-left:1px solid #ececec"></div>
<div class="a" style="left:79px;top:150px;width:1757px;height:1px;background:#e8e8e8"></div>
<div class="a" style="left:572px;top:150px;width:1264px;height:0px;"></div>
<div class="a" style="left:79px;top:151px;width:1757px;height:377px;background:#fdfdfd"></div>
<div class="a" style="left:79px;top:151px;width:246px;height:377px;background:#fff;box-shadow:1px 0 2px rgba(0,0,0,0.06)"></div>
<div class="t" style="left:97.5px;top:164.85px;font-size:11.3px;color:#444;-webkit-text-stroke:0.4px #444;letter-spacing:0.15px">Purchase Orders</div>
<div class="t" style="left:98px;top:195.80px;font-size:7.4px;color:#555;-webkit-text-stroke:0.3px #555">Purchase Or...</div>
<div class="t" style="left:170px;top:200.35px;font-size:7.9px;color:#555;-webkit-text-stroke:0.3px #555">Status</div>
<div class="t" style="left:228px;top:200.35px;font-size:7.9px;color:#555;-webkit-text-stroke:0.3px #555">Purchaser</div>
<svg class="a" style="left:96px;top:205px;" width="10" height="8" viewBox="0 0 10 8"><path d="M5 0 V6 M3 4.5 L5 7 L7 4.5" stroke="#555" stroke-width="1" fill="none"/></svg>
<svg class="a" style="left:302px;top:196px;" width="16" height="16" viewBox="0 0 16 16"><circle cx="7" cy="7" r="4.6" stroke="#2d4f80" stroke-width="1.6" fill="none"/><line x1="10.3" y1="10.3" x2="14" y2="14" stroke="#2d4f80" stroke-width="1.8"/></svg>
<div class="a" style="left:94px;top:217px;width:230px;height:1px;background:#eee"></div>
<svg class="a" style="left:97px;top:222px;" width="16" height="16" viewBox="0 0 16 16"><circle cx="6.5" cy="6.5" r="4.3" stroke="#7a7a7a" stroke-width="1.1" fill="none"/><line x1="9.6" y1="9.6" x2="13" y2="13" stroke="#7a7a7a" stroke-width="1.2"/></svg>
<div class="t" style="left:170px;top:225.40px;font-size:7.8px;color:#555;-webkit-text-stroke:0.3px #555">(All)</div>
<svg class="a" style="left:211px;top:226.5px;" width="8" height="5" viewBox="0 0 8 5"><path d="M1.5 0.5 L6 0.5 L3.75 3.3 Z" fill="#444"/></svg>
<svg class="a" style="left:225px;top:222px;" width="16" height="16" viewBox="0 0 16 16"><circle cx="6.5" cy="6.5" r="4.3" stroke="#7a7a7a" stroke-width="1.1" fill="none"/><line x1="9.6" y1="9.6" x2="13" y2="13" stroke="#7a7a7a" stroke-width="1.2"/></svg>
<div class="a" style="left:94px;top:240px;width:230px;height:1px;background:#eee"></div>
<div class="t" style="left:-91px;width:600px;text-align:center;top:370.05px;font-size:8.5px;color:#9a9a9a">No data</div>
<div class="a" style="left:82px;top:322px;width:3px;height:34px;background:#c4c4c4;border-radius:2px"></div>
<svg class="a" style="left:21px;top:311px;" width="4" height="12" viewBox="0 0 4 12"><circle cx="2" cy="2" r="1.1" fill="#444"/><circle cx="2" cy="6" r="1.1" fill="#444"/><circle cx="2" cy="10" r="1.1" fill="#444"/></svg>
<div class="a" style="left:45px;top:411px;width:29px;height:65px;background:#fff;border-radius:3px;box-shadow:0 0 3px rgba(0,0,0,0.12)"></div>
<svg class="a" style="left:45px;top:411px;" width="29" height="65" viewBox="0 0 29 65"><circle cx="13.5" cy="14.5" r="5.5" stroke="#555" stroke-width="1.1" fill="none"/><line x1="17.5" y1="18.5" x2="21" y2="22" stroke="#555" stroke-width="1.2"/><path d="M11 14.5 H16 M13.5 12 V17" stroke="#555"/><line x1="5" y1="33" x2="24" y2="33" stroke="#eee"/><circle cx="13.5" cy="47.5" r="5.5" stroke="#555" stroke-width="1.1" fill="none"/><line x1="17.5" y1="51.5" x2="21" y2="55" stroke="#555" stroke-width="1.2"/><path d="M11 47.5 H16" stroke="#555"/></svg>
<div class="t" style="left:342px;top:165.40px;font-size:11.2px;color:#444;-webkit-text-stroke:0.35px #444">cPON-A-20200902-183605</div>
<div class="a" style="left:487px;top:163px;width:76px;height:16px;background:#c9c9c9;border-radius:3px;overflow:hidden"><div class="a" style="left:0;top:0;width:16px;height:100%;background:#c2c2c2"></div><svg class="a" style="left:3px;top:3px" width="11" height="11"><rect x="1" y="2" width="7" height="6" stroke="#eee" fill="none"/><path d="M3 9.5 H9.5 V4" stroke="#eee" fill="none"/></svg></div>
<div class="t" style="left:507px;top:167.60px;font-size:7.4px;color:#f2f2f2">Copy to invoice</div>
<div class="a" style="left:569px;top:163px;width:128px;height:16px;background:#c9c9c9;border-radius:3px;overflow:hidden"><div class="a" style="left:0;top:0;width:16px;height:100%;background:#c2c2c2"></div><svg class="a" style="left:3px;top:3px" width="11" height="11"><rect x="1" y="2" width="7" height="6" stroke="#eee" fill="none"/><path d="M3 9.5 H9.5 V4" stroke="#eee" fill="none"/></svg></div>
<div class="t" style="left:589px;top:167.60px;font-size:7.4px;color:#f2f2f2">Copy and replace invoice lines</div>
<div class="t" style="left:1827px;top:166.70px;font-size:7.6px;color:#333;font-weight:bold">De</div>
<div class="a" style="left:323px;top:191px;width:1513px;height:24px;background:#fff"></div>
<div class="a" style="left:323px;top:215px;width:1513px;height:158px;background:#f5f5f5"></div>
<div class="a" style="left:323px;top:215px;width:49px;height:158px;background:#fafafa"></div>
<div class="t" style="left:376.5px;top:200.00px;font-size:8.2px;color:#505050;-webkit-text-stroke:0.2px #505050">PO Line</div>
<div class="t" style="left:425.5px;top:200.00px;font-size:8.2px;color:#505050;-webkit-text-stroke:0.2px #505050">Status</div>
<div class="t" style="left:469.5px;top:200.00px;font-size:8.2px;color:#505050;-webkit-text-stroke:0.2px #505050">Category</div>
<div class="t" style="left:521.5px;top:200.00px;font-size:8.2px;color:#505050;-webkit-text-stroke:0.2px #505050">Customer Item no</div>
<div class="t" style="left:607.5px;top:200.00px;font-size:8.2px;color:#505050;-webkit-text-stroke:0.2px #505050">Seller Item no</div>
<div class="t" style="left:678.5px;top:200.00px;font-size:8.2px;color:#505050;-webkit-text-stroke:0.2px #505050">IL Description</div>
<div class="t" style="left:780.5px;top:200.00px;font-size:8.2px;color:#505050;-webkit-text-stroke:0.2px #505050">Ordered</div>
<div class="t" style="left:833.5px;top:200.00px;font-size:8.2px;color:#505050;-webkit-text-stroke:0.2px #505050">Remaining</div>
<div class="t" style="left:892.5px;top:200.00px;font-size:8.2px;color:#505050;-webkit-text-stroke:0.2px #505050">Receieved</div>
<div class="t" style="left:949.5px;top:200.00px;font-size:8.2px;color:#505050;-webkit-text-stroke:0.2px #505050">Available</div>
<div class="t" style="left:1003.5px;top:200.00px;font-size:8.2px;color:#505050;-webkit-text-stroke:0.2px #505050">Invoiced</div>
<div class="t" style="left:1054.5px;top:200.00px;font-size:8.2px;color:#505050;-webkit-text-stroke:0.2px #505050">Matched</div>
<div class="t" style="left:1106.5px;top:200.00px;font-size:8.2px;color:#505050;-webkit-text-stroke:0.2px #505050">Sent to ERP</div>
<div class="t" style="left:1168.5px;top:200.00px;font-size:8.2px;color:#505050;-webkit-text-stroke:0.2px #505050">Unit</div>
<div class="t" style="left:1206.5px;top:200.00px;font-size:8.2px;color:#505050;-webkit-text-stroke:0.2px #505050">Unit Price</div>
<div class="t" style="left:1261.5px;top:200.00px;font-size:8.2px;color:#505050;-webkit-text-stroke:0.2px #505050">Order line net total</div>
<div class="t" style="left:1350.5px;top:200.00px;font-size:8.2px;color:#505050;-webkit-text-stroke:0.2px #505050">Total amount</div>
<div class="t" style="left:1419.5px;top:200.00px;font-size:8.2px;color:#505050;-webkit-text-stroke:0.2px #505050">Received line net total</div>
<div class="t" style="left:1518.5px;top:200.00px;font-size:8.2px;color:#505050;-webkit-text-stroke:0.2px #505050">Available net amount</div>
<div class="t" style="left:1615.5px;top:200.00px;font-size:8.2px;color:#505050;-webkit-text-stroke:0.2px #505050">Available total amount</div>
<div class="t" style="left:1715.5px;top:200.00px;font-size:8.2px;color:#505050;-webkit-text-stroke:0.2px #505050">Invoice now net</div>
<div class="t" style="left:1792.5px;top:200.00px;font-size:8.2px;color:#505050;-webkit-text-stroke:0.2px #505050">Invoice now</div>
<div class="a" style="left:372px;top:191px;width:1px;height:182px;background:#eeeeee"></div>
<div class="a" style="left:421px;top:191px;width:1px;height:182px;background:#eeeeee"></div>
<div class="a" style="left:465px;top:191px;width:1px;height:182px;background:#eeeeee"></div>
<div class="a" style="left:517px;top:191px;width:1px;height:182px;background:#eeeeee"></div>
<div class="a" style="left:603px;top:191px;width:1px;height:182px;background:#eeeeee"></div>
<div class="a" style="left:674px;top:191px;width:1px;height:182px;background:#eeeeee"></div>
<div class="a" style="left:776px;top:191px;width:1px;height:182px;background:#eeeeee"></div>
<div class="a" style="left:829px;top:191px;width:1px;height:182px;background:#eeeeee"></div>
<div class="a" style="left:888px;top:191px;width:1px;height:182px;background:#eeeeee"></div>
<div class="a" style="left:945px;top:191px;width:1px;height:182px;background:#eeeeee"></div>
<div class="a" style="left:999px;top:191px;width:1px;height:182px;background:#eeeeee"></div>
<div class="a" style="left:1050px;top:191px;width:1px;height:182px;background:#eeeeee"></div>
<div class="a" style="left:1102px;top:191px;width:1px;height:182px;background:#eeeeee"></div>
<div class="a" style="left:1164px;top:191px;width:1px;height:182px;background:#eeeeee"></div>
<div class="a" style="left:1202px;top:191px;width:1px;height:182px;background:#eeeeee"></div>
<div class="a" style="left:1257px;top:191px;width:1px;height:182px;background:#eeeeee"></div>
<div class="a" style="left:1346px;top:191px;width:1px;height:182px;background:#eeeeee"></div>
<div class="a" style="left:1415px;top:191px;width:1px;height:182px;background:#eeeeee"></div>
<div class="a" style="left:1514px;top:191px;width:1px;height:182px;background:#eeeeee"></div>
<div class="a" style="left:1611px;top:191px;width:1px;height:182px;background:#eeeeee"></div>
<div class="a" style="left:1711px;top:191px;width:1px;height:182px;background:#eeeeee"></div>
<div class="a" style="left:1788px;top:191px;width:1px;height:182px;background:#eeeeee"></div>
<div class="a" style="left:371px;top:191px;width:1px;height:182px;background:#e2e2e2"></div>
<div class="a" style="left:323px;top:215px;width:1513px;height:1px;background:#ededed"></div>
<div class="a" style="left:323px;top:238px;width:1513px;height:1px;background:#ededed"></div>
<div class="a" style="left:323px;top:260px;width:1513px;height:1px;background:#ededed"></div>
<div class="a" style="left:323px;top:283px;width:1513px;height:1px;background:#ededed"></div>
<div class="a" style="left:323px;top:305px;width:1513px;height:1px;background:#ededed"></div>
<div class="a" style="left:323px;top:328px;width:1513px;height:1px;background:#ededed"></div>
<div class="a" style="left:323px;top:351px;width:1513px;height:1px;background:#ededed"></div>
<div class="a" style="left:323px;top:373px;width:1513px;height:1px;background:#ededed"></div>
<div class="a" style="left:347px;top:197px;width:9px;height:10px;border:1px solid #e0e0e0;background:#fff;border-radius:1px"></div>
<div class="a" style="left:347px;top:222px;width:9px;height:10px;border:1px solid #e6e6e6;background:#fbfbfb;border-radius:1px"></div>
<div class="t" style="right:1419.5px;top:223.40px;font-size:7.8px;color:#555">1</div>
<div class="t" style="left:469px;top:223.40px;font-size:7.8px;color:#555">freight</div>
<div class="t" style="left:678px;top:223.40px;font-size:7.8px;color:#555">Line Description - NoMatch</div>
<div class="t" style="right:1011px;top:223.40px;font-size:7.8px;color:#444">1.00</div>
<div class="t" style="right:952px;top:223.40px;font-size:7.8px;color:#c8c8c8">0.00</div>
<div class="t" style="right:894px;top:223.40px;font-size:7.8px;color:#444">1.00</div>
<div class="t" style="right:841px;top:223.40px;font-size:7.8px;color:#1f9d7a">1.00</div>
<div class="t" style="right:789px;top:223.40px;font-size:7.8px;color:#c8c8c8">0.00</div>
<div class="t" style="right:737px;top:223.40px;font-size:7.8px;color:#c8c8c8">0.00</div>
<div class="t" style="right:675px;top:223.40px;font-size:7.8px;color:#c8c8c8">0.00</div>
<div class="t" style="right:582px;top:223.40px;font-size:7.8px;color:#555">120.00</div>
<div class="t" style="right:494px;top:223.40px;font-size:7.8px;color:#555">2.00</div>
<div class="t" style="right:424px;top:223.40px;font-size:7.8px;color:#555">2</div>
<div class="t" style="right:326px;top:223.40px;font-size:7.8px;color:#555">1</div>
<div class="t" style="right:229px;top:223.40px;font-size:7.8px;color:#555">120.00</div>
<div class="a" style="left:347px;top:245px;width:9px;height:10px;border:1px solid #e6e6e6;background:#fbfbfb;border-radius:1px"></div>
<div class="t" style="right:1419.5px;top:245.90px;font-size:7.8px;color:#555">2</div>
<div class="t" style="left:469px;top:245.90px;font-size:7.8px;color:#555">freight</div>
<div class="t" style="left:678px;top:245.90px;font-size:7.8px;color:#555">Line Description - NoMatch</div>
<div class="t" style="right:1011px;top:245.90px;font-size:7.8px;color:#444">1.00</div>
<div class="t" style="right:952px;top:245.90px;font-size:7.8px;color:#c8c8c8">0.00</div>
<div class="t" style="right:894px;top:245.90px;font-size:7.8px;color:#444">1.00</div>
<div class="t" style="right:841px;top:245.90px;font-size:7.8px;color:#1f9d7a">1.00</div>
<div class="t" style="right:789px;top:245.90px;font-size:7.8px;color:#c8c8c8">0.00</div>
<div class="t" style="right:737px;top:245.90px;font-size:7.8px;color:#c8c8c8">0.00</div>
<div class="t" style="right:675px;top:245.90px;font-size:7.8px;color:#c8c8c8">0.00</div>
<div class="t" style="right:582px;top:245.90px;font-size:7.8px;color:#555">100.00</div>
<div class="t" style="right:494px;top:245.90px;font-size:7.8px;color:#555">2.00</div>
<div class="t" style="right:424px;top:245.90px;font-size:7.8px;color:#555">2</div>
<div class="t" style="right:326px;top:245.90px;font-size:7.8px;color:#555">1</div>
<div class="t" style="right:229px;top:245.90px;font-size:7.8px;color:#555">100.00</div>
<div class="a" style="left:347px;top:267px;width:9px;height:10px;border:1px solid #e6e6e6;background:#fbfbfb;border-radius:1px"></div>
<div class="t" style="right:1419.5px;top:268.40px;font-size:7.8px;color:#555">3</div>
<div class="t" style="left:469px;top:268.40px;font-size:7.8px;color:#555">freight</div>
<div class="t" style="left:678px;top:268.40px;font-size:7.8px;color:#555">Line Description</div>
<div class="t" style="right:1011px;top:268.40px;font-size:7.8px;color:#444">1.00</div>
<div class="t" style="right:952px;top:268.40px;font-size:7.8px;color:#c8c8c8">0.00</div>
<div class="t" style="right:894px;top:268.40px;font-size:7.8px;color:#444">1.00</div>
<div class="t" style="right:841px;top:268.40px;font-size:7.8px;color:#1f9d7a">1.00</div>
<div class="t" style="right:789px;top:268.40px;font-size:7.8px;color:#c8c8c8">0.00</div>
<div class="t" style="right:737px;top:268.40px;font-size:7.8px;color:#c8c8c8">0.00</div>
<div class="t" style="right:675px;top:268.40px;font-size:7.8px;color:#c8c8c8">0.00</div>
<div class="t" style="right:582px;top:268.40px;font-size:7.8px;color:#555">100.00</div>
<div class="t" style="right:494px;top:268.40px;font-size:7.8px;color:#555">2.00</div>
<div class="t" style="right:424px;top:268.40px;font-size:7.8px;color:#555">2</div>
<div class="t" style="right:326px;top:268.40px;font-size:7.8px;color:#555">1</div>
<div class="t" style="right:229px;top:268.40px;font-size:7.8px;color:#555">100.00</div>
<div class="a" style="left:347px;top:290px;width:9px;height:10px;border:1px solid #e6e6e6;background:#fbfbfb;border-radius:1px"></div>
<div class="t" style="right:1419.5px;top:290.90px;font-size:7.8px;color:#555">4</div>
<div class="t" style="left:469px;top:290.90px;font-size:7.8px;color:#555">freight</div>
<div class="t" style="left:678px;top:290.90px;font-size:7.8px;color:#555">Line Description</div>
<div class="t" style="right:1011px;top:290.90px;font-size:7.8px;color:#444">1.00</div>
<div class="t" style="right:952px;top:290.90px;font-size:7.8px;color:#c8c8c8">0.00</div>
<div class="t" style="right:894px;top:290.90px;font-size:7.8px;color:#444">1.00</div>
<div class="t" style="right:841px;top:290.90px;font-size:7.8px;color:#1f9d7a">1.00</div>
<div class="t" style="right:789px;top:290.90px;font-size:7.8px;color:#c8c8c8">0.00</div>
<div class="t" style="right:737px;top:290.90px;font-size:7.8px;color:#c8c8c8">0.00</div>
<div class="t" style="right:675px;top:290.90px;font-size:7.8px;color:#c8c8c8">0.00</div>
<div class="t" style="right:582px;top:290.90px;font-size:7.8px;color:#555">100.00</div>
<div class="t" style="right:494px;top:290.90px;font-size:7.8px;color:#555">2.00</div>
<div class="t" style="right:424px;top:290.90px;font-size:7.8px;color:#555">2</div>
<div class="t" style="right:326px;top:290.90px;font-size:7.8px;color:#555">1</div>
<div class="t" style="right:229px;top:290.90px;font-size:7.8px;color:#555">100.00</div>
<div class="a" style="left:347px;top:312px;width:9px;height:10px;border:1px solid #e6e6e6;background:#fbfbfb;border-radius:1px"></div>
<div class="t" style="right:1419.5px;top:313.40px;font-size:7.8px;color:#555">5</div>
<div class="t" style="left:469px;top:313.40px;font-size:7.8px;color:#555">freight</div>
<div class="t" style="left:678px;top:313.40px;font-size:7.8px;color:#555">Line Description</div>
<div class="t" style="right:1011px;top:313.40px;font-size:7.8px;color:#444">1.00</div>
<div class="t" style="right:952px;top:313.40px;font-size:7.8px;color:#c8c8c8">0.00</div>
<div class="t" style="right:894px;top:313.40px;font-size:7.8px;color:#444">1.00</div>
<div class="t" style="right:841px;top:313.40px;font-size:7.8px;color:#1f9d7a">1.00</div>
<div class="t" style="right:789px;top:313.40px;font-size:7.8px;color:#c8c8c8">0.00</div>
<div class="t" style="right:737px;top:313.40px;font-size:7.8px;color:#c8c8c8">0.00</div>
<div class="t" style="right:675px;top:313.40px;font-size:7.8px;color:#c8c8c8">0.00</div>
<div class="t" style="right:582px;top:313.40px;font-size:7.8px;color:#555">100.00</div>
<div class="t" style="right:494px;top:313.40px;font-size:7.8px;color:#555">100.00</div>
<div class="t" style="right:424px;top:313.40px;font-size:7.8px;color:#555">2</div>
<div class="t" style="right:326px;top:313.40px;font-size:7.8px;color:#555">1</div>
<div class="t" style="right:229px;top:313.40px;font-size:7.8px;color:#555">100.00</div>
<div class="a" style="left:347px;top:335px;width:9px;height:10px;border:1px solid #e6e6e6;background:#fbfbfb;border-radius:1px"></div>
<div class="t" style="right:1419.5px;top:335.90px;font-size:7.8px;color:#555">6</div>
<div class="t" style="left:469px;top:335.90px;font-size:7.8px;color:#555">freight</div>
<div class="t" style="left:678px;top:335.90px;font-size:7.8px;color:#555">Line Description</div>
<div class="t" style="right:1011px;top:335.90px;font-size:7.8px;color:#444">1.00</div>
<div class="t" style="right:952px;top:335.90px;font-size:7.8px;color:#c8c8c8">0.00</div>
<div class="t" style="right:894px;top:335.90px;font-size:7.8px;color:#444">1.00</div>
<div class="t" style="right:841px;top:335.90px;font-size:7.8px;color:#1f9d7a">1.00</div>
<div class="t" style="right:789px;top:335.90px;font-size:7.8px;color:#c8c8c8">0.00</div>
<div class="t" style="right:737px;top:335.90px;font-size:7.8px;color:#c8c8c8">0.00</div>
<div class="t" style="right:675px;top:335.90px;font-size:7.8px;color:#c8c8c8">0.00</div>
<div class="t" style="right:582px;top:335.90px;font-size:7.8px;color:#555">100.00</div>
<div class="t" style="right:494px;top:335.90px;font-size:7.8px;color:#555">100.00</div>
<div class="t" style="right:424px;top:335.90px;font-size:7.8px;color:#555">125</div>
<div class="t" style="right:326px;top:335.90px;font-size:7.8px;color:#555">1</div>
<div class="t" style="right:229px;top:335.90px;font-size:7.8px;color:#555">100.00</div>
<div class="a" style="left:347px;top:357px;width:9px;height:10px;border:1px solid #e6e6e6;background:#fbfbfb;border-radius:1px"></div>
<div class="t" style="right:1419.5px;top:358.40px;font-size:7.8px;color:#555">7</div>
<div class="t" style="left:469px;top:358.40px;font-size:7.8px;color:#555">freight</div>
<div class="t" style="left:678px;top:358.40px;font-size:7.8px;color:#555">Line Description</div>
<div class="t" style="right:1011px;top:358.40px;font-size:7.8px;color:#444">1.00</div>
<div class="t" style="right:952px;top:358.40px;font-size:7.8px;color:#c8c8c8">0.00</div>
<div class="t" style="right:894px;top:358.40px;font-size:7.8px;color:#444">1.00</div>
<div class="t" style="right:841px;top:358.40px;font-size:7.8px;color:#1f9d7a">1.00</div>
<div class="t" style="right:789px;top:358.40px;font-size:7.8px;color:#c8c8c8">0.00</div>
<div class="t" style="right:737px;top:358.40px;font-size:7.8px;color:#c8c8c8">0.00</div>
<div class="t" style="right:675px;top:358.40px;font-size:7.8px;color:#c8c8c8">0.00</div>
<div class="t" style="right:582px;top:358.40px;font-size:7.8px;color:#555">100.00</div>
<div class="t" style="right:494px;top:358.40px;font-size:7.8px;color:#555">100.00</div>
<div class="t" style="right:424px;top:358.40px;font-size:7.8px;color:#555">125</div>
<div class="t" style="right:326px;top:358.40px;font-size:7.8px;color:#555">1</div>
<div class="t" style="right:229px;top:358.40px;font-size:7.8px;color:#555">100.00</div>
<div class="a" style="left:27px;top:502px;width:9px;height:27px;background:#f2f2f2"></div>
<div class="a" style="left:36px;top:502px;width:43px;height:6px;background:#efefef"></div>
<div class="a" style="left:65px;top:502px;width:14px;height:6px;background:#e6e6e6"></div>
<div class="a" style="left:36px;top:508px;width:289px;height:20px;background:#fdfdfd"></div>
<div class="a" style="left:36px;top:508px;width:7px;height:20px;background:#f0f0f0"></div>
<div class="a" style="left:325px;top:508px;width:1px;height:20px;background:#f0f0f0"></div>
<div class="a" style="left:27px;top:528px;width:1809px;height:1px;background:#dedede"></div>
<div class="a" style="left:27px;top:529px;width:1809px;height:222px;background:#f8f8f8"></div>
<div class="a" style="left:27px;top:529px;width:10px;height:259px;background:#f4f4f4"></div>
<div class="a" style="left:43px;top:508px;width:82px;height:20px;background:#efefef;border:1px solid #e4e4e4;border-bottom:none;border-radius:4px 4px 0 0"></div>
<div class="t" style="left:-216.0px;width:600px;text-align:center;top:515.10px;font-size:7.8px;color:#d0d0d0">Invoice Lines</div>
<div class="a" style="left:126px;top:508px;width:98px;height:20px;background:#efefef;border:1px solid #e4e4e4;border-bottom:none;border-radius:4px 4px 0 0"></div>
<div class="t" style="left:-125.0px;width:600px;text-align:center;top:515.10px;font-size:7.8px;color:#d0d0d0">Accounting Lines</div>
<div class="a" style="left:225px;top:508px;width:90px;height:21px;background:#f8f8f8;border:1px solid #e4e4e4;border-bottom:none;border-radius:4px 4px 0 0"></div>
<div class="t" style="left:-30.0px;width:600px;text-align:center;top:515.10px;font-size:7.8px;color:#444">Purchase Lines</div>
<div class="a" style="left:37px;top:539px;width:46px;height:17px;background:#8c8c8c;border-radius:3px;overflow:hidden"><div class="a" style="left:0;top:0;width:15px;height:100%;background:#7e7e7e"></div><svg class="a" style="left:3px;top:4px" width="9" height="9"><path d="M1 1 L8 8 M8 1 L1 8" stroke="#eee" stroke-width="1.2"/></svg></div>
<div class="t" style="left:56px;top:544.00px;font-size:7.6px;color:#f4f4f4">Delete</div>
<div class="a" style="left:89px;top:539px;width:38.5px;height:17px;background:#8c8c8c;border-radius:3px;overflow:hidden"><div class="a" style="left:0;top:0;width:16px;height:100%;background:#7e7e7e"></div><div class="t" style="left:2px;top:4.5px;font-size:7px;color:#eee">1/n</div></div>
<div class="t" style="left:109px;top:544.00px;font-size:7.6px;color:#f4f4f4">Split</div>
<div class="a" style="left:133px;top:539px;width:52.5px;height:17px;background:#8c8c8c;border-radius:3px;overflow:hidden"><div class="a" style="left:0;top:0;width:16px;height:100%;background:#7e7e7e"></div><svg class="a" style="left:3px;top:3px" width="11" height="11"><path d="M5.5 1 V10 M1 5.5 H10" stroke="#eee" stroke-width="1.1"/></svg></div>
<div class="t" style="left:153px;top:544.00px;font-size:7.6px;color:#f4f4f4">Add row</div>
<div class="a" style="left:192px;top:539px;width:45px;height:17px;background:#c8c8c8;border-radius:3px;overflow:hidden"><div class="a" style="left:0;top:0;width:15px;height:100%;background:#c0c0c0"></div><svg class="a" style="left:3px;top:3px" width="11" height="11"><rect x="1" y="2" width="7" height="6" stroke="#eee" fill="none"/><path d="M3 9.5 H9.5 V4" stroke="#eee" fill="none"/></svg></div>
<div class="t" style="left:211px;top:544.00px;font-size:7.6px;color:#eeeeee">Merge</div>
<div class="a" style="left:243px;top:539px;width:44.5px;height:17px;background:#c8c8c8;border-radius:3px"></div>
<div class="t" style="left:-34.69999999999999px;width:600px;text-align:center;top:544.10px;font-size:7.4px;color:#e8e8e8">Reset lines</div>
<div class="a" style="left:293.5px;top:539px;width:99.5px;height:17px;background:#8c8c8c;border-radius:3px;overflow:hidden"><div class="a" style="left:0;top:0;width:16px;height:100%;background:#7e7e7e"></div><div class="t" style="left:3px;top:5.5px;font-size:5.5px;color:#eee">PO</div></div>
<div class="t" style="left:313.5px;top:544.00px;font-size:7.6px;color:#f4f4f4">Run PO match service</div>
<div class="t" style="left:1461px;top:543.70px;font-size:7.8px;color:#808080">Invoice Total</div>
<div class="t" style="left:1513px;top:543.90px;font-size:7.4px;color:#333">126,15</div>
<div class="a" style="left:1540px;top:540px;width:1px;height:15px;background:#e8e8e8"></div>
<div class="t" style="left:1548px;top:543.70px;font-size:7.8px;color:#808080">Matched</div>
<div class="t" style="left:1586px;top:543.90px;font-size:7.4px;color:#e0413a">0,00</div>
<div class="a" style="left:1603px;top:540px;width:1px;height:15px;background:#e8e8e8"></div>
<div class="t" style="left:1612px;top:543.70px;font-size:7.8px;color:#808080">Category</div>
<div class="t" style="left:1651px;top:543.90px;font-size:7.4px;color:#1fae7e">0,00</div>
<div class="a" style="left:1670px;top:540px;width:1px;height:15px;background:#e8e8e8"></div>
<div class="t" style="left:1678px;top:543.70px;font-size:7.8px;color:#808080">Open</div>
<div class="t" style="left:1705px;top:543.90px;font-size:7.4px;color:#e0413a">126,15</div>
<div class="a" style="left:1731px;top:540px;width:1px;height:15px;background:#e8e8e8"></div>
<div class="t" style="left:1739px;top:543.70px;font-size:7.8px;color:#808080">Rounding</div>
<div class="t" style="left:1781px;top:543.90px;font-size:7.4px;color:#333">0,00</div>
<svg class="a" style="left:1806px;top:541px;" width="13" height="13" viewBox="0 0 13 13"><circle cx="6.5" cy="6.5" r="5.2" stroke="#666" stroke-width="1.1" fill="none"/><path d="M6.5 3.5 V7.5 M6.5 8.8 V9.8" stroke="#333" stroke-width="1.1"/></svg>
<div class="t" style="left:1826px;top:543.90px;font-size:7.4px;color:#222;font-weight:bold">De</div>
<div class="a" style="left:37px;top:562px;width:1799px;height:187px;background:#fff"></div>
<div class="a" style="left:658px;top:562px;width:1129px;height:24px;background:#ececec"></div>
<div class="a" style="left:37px;top:586px;width:1799px;height:24px;background:#fff"></div>
<div class="a" style="left:573px;top:586px;width:85px;height:24px;background:#f6f6f6"></div>
<div class="a" style="left:658px;top:586px;width:1129px;height:24px;background:#f5f5f5"></div>
<div class="a" style="left:37px;top:610px;width:1799px;height:22px;background:#eaf3fb"></div>
<div class="t" style="left:81.5px;top:570.10px;font-size:8.2px;color:#505050;-webkit-text-stroke:0.2px #505050">Line</div>
<div class="t" style="left:121.5px;top:570.10px;font-size:8.2px;color:#505050;-webkit-text-stroke:0.2px #505050">Item</div>
<div class="t" style="left:179.5px;top:570.10px;font-size:8.2px;color:#505050;-webkit-text-stroke:0.2px #505050">PO Category</div>
<div class="t" style="left:265.5px;top:570.10px;font-size:8.2px;color:#505050;-webkit-text-stroke:0.2px #505050">IL Description</div>
<div class="t" style="left:380.5px;top:570.10px;font-size:8.2px;color:#505050;-webkit-text-stroke:0.2px #505050">Ordered</div>
<div class="t" style="left:421.5px;top:570.10px;font-size:8.2px;color:#505050;-webkit-text-stroke:0.2px #505050">Unit Price</div>
<div class="t" style="left:479.0px;top:570.10px;font-size:8.2px;color:#505050;-webkit-text-stroke:0.2px #505050">VAT %</div>
<div class="t" style="left:519.5px;top:570.10px;font-size:8.2px;color:#505050;-webkit-text-stroke:0.2px #505050">Line Total</div>
<div class="t" style="left:577.5px;top:570.10px;font-size:8.2px;color:#505050;-webkit-text-stroke:0.2px #505050">Line Total incl VAT</div>
<div class="t" style="left:662.5px;top:570.10px;font-size:8.2px;color:#505050;-webkit-text-stroke:0.2px #505050">Purchase Order</div>
<div class="t" style="left:1188.5px;top:570.10px;font-size:8.2px;color:#505050;-webkit-text-stroke:0.2px #505050">Matched</div>
<div class="t" style="left:1235.5px;top:570.10px;font-size:8.2px;color:#505050;-webkit-text-stroke:0.2px #505050">Unit</div>
<div class="t" style="left:1276.5px;top:570.10px;font-size:8.2px;color:#505050;-webkit-text-stroke:0.2px #505050">PO Unit price</div>
<div class="t" style="left:1345.0px;top:570.10px;font-size:8.2px;color:#505050;-webkit-text-stroke:0.2px #505050">PO Vat rate</div>
<div class="t" style="left:1403.0px;top:570.10px;font-size:8.2px;color:#505050;-webkit-text-stroke:0.2px #505050">PO Discount</div>
<div class="t" style="left:1460.5px;top:570.10px;font-size:8.2px;color:#505050;-webkit-text-stroke:0.2px #505050">PO Discoun...</div>
<div class="t" style="left:1517.5px;top:570.10px;font-size:8.2px;color:#505050;-webkit-text-stroke:0.2px #505050">Qty deviation</div>
<div class="t" style="left:1580.5px;top:570.10px;font-size:8.2px;color:#505050;-webkit-text-stroke:0.2px #505050">Price deviation</div>
<div class="t" style="left:1650.5px;top:570.10px;font-size:8.2px;color:#505050;-webkit-text-stroke:0.2px #505050">Net amount de...</div>
<div class="t" style="left:1722.5px;top:570.10px;font-size:8.2px;color:#505050;-webkit-text-stroke:0.2px #505050">Total amount ...</div>
<div class="t" style="left:1791.5px;top:570.10px;font-size:8.2px;color:#505050;-webkit-text-stroke:0.2px #505050">Product</div>
<div class="a" style="left:77px;top:562px;width:1px;height:187px;background:#efefef"></div>
<div class="a" style="left:117px;top:562px;width:1px;height:187px;background:#efefef"></div>
<div class="a" style="left:175px;top:562px;width:1px;height:187px;background:#efefef"></div>
<div class="a" style="left:261px;top:562px;width:1px;height:187px;background:#efefef"></div>
<div class="a" style="left:376px;top:562px;width:1px;height:187px;background:#efefef"></div>
<div class="a" style="left:417px;top:562px;width:1px;height:187px;background:#efefef"></div>
<div class="a" style="left:474px;top:562px;width:1px;height:187px;background:#efefef"></div>
<div class="a" style="left:515px;top:562px;width:1px;height:187px;background:#efefef"></div>
<div class="a" style="left:573px;top:562px;width:1px;height:187px;background:#efefef"></div>
<div class="a" style="left:658px;top:562px;width:1px;height:187px;background:#efefef"></div>
<div class="a" style="left:727px;top:562px;width:1px;height:187px;background:#efefef"></div>
<div class="a" style="left:825px;top:562px;width:1px;height:187px;background:#efefef"></div>
<div class="a" style="left:939px;top:562px;width:1px;height:187px;background:#efefef"></div>
<div class="a" style="left:986px;top:562px;width:1px;height:187px;background:#efefef"></div>
<div class="a" style="left:1034px;top:562px;width:1px;height:187px;background:#efefef"></div>
<div class="a" style="left:1088px;top:562px;width:1px;height:187px;background:#efefef"></div>
<div class="a" style="left:1140px;top:562px;width:1px;height:187px;background:#efefef"></div>
<div class="a" style="left:1184px;top:562px;width:1px;height:187px;background:#efefef"></div>
<div class="a" style="left:1231px;top:562px;width:1px;height:187px;background:#efefef"></div>
<div class="a" style="left:1272px;top:562px;width:1px;height:187px;background:#efefef"></div>
<div class="a" style="left:1340px;top:562px;width:1px;height:187px;background:#efefef"></div>
<div class="a" style="left:1398px;top:562px;width:1px;height:187px;background:#efefef"></div>
<div class="a" style="left:1456px;top:562px;width:1px;height:187px;background:#efefef"></div>
<div class="a" style="left:1513px;top:562px;width:1px;height:187px;background:#efefef"></div>
<div class="a" style="left:1576px;top:562px;width:1px;height:187px;background:#efefef"></div>
<div class="a" style="left:1646px;top:562px;width:1px;height:187px;background:#efefef"></div>
<div class="a" style="left:1718px;top:562px;width:1px;height:187px;background:#efefef"></div>
<div class="a" style="left:1787px;top:562px;width:1px;height:187px;background:#efefef"></div>
<div class="a" style="left:77px;top:562px;width:1px;height:187px;background:#e2e2e2"></div>
<div class="a" style="left:37px;top:586px;width:1799px;height:1px;background:#e3e3e3"></div>
<div class="a" style="left:37px;top:610px;width:1799px;height:1px;background:#eaeaea"></div>
<div class="a" style="left:37px;top:632px;width:1799px;height:1px;background:#e6e6e6"></div>
<div class="a" style="left:37px;top:749px;width:1799px;height:2px;background:#e2e2e2"></div>
<div class="a" style="left:37px;top:751px;width:1799px;height:6px;background:#f1f1f1"></div>
<div class="a" style="left:52px;top:569px;width:9px;height:9px;border:1px solid #dfe6ef;background:#fff;border-radius:1px"></div>
<div class="a" style="left:55px;top:572px;width:3px;height:3px;background:#2d5aa0;border-radius:50%"></div>
<div class="a" style="left:52px;top:593px;width:9px;height:10px;border:1px solid #e2e2e2;background:#fff;border-radius:1px"></div>
<div class="t" style="right:1722px;top:594.10px;font-size:7.8px;color:#555">1</div>
<div class="t" style="left:265.5px;top:594.10px;font-size:7.8px;color:#555">Example Item 1 15 Percent</div>
<div class="t" style="right:1423px;top:594.10px;font-size:7.8px;color:#555">1.00</div>
<div class="t" style="right:1366px;top:594.10px;font-size:7.8px;color:#555">1.00</div>
<div class="t" style="right:1325px;top:594.10px;font-size:7.8px;color:#555">15.00</div>
<div class="t" style="right:1267px;top:594.10px;font-size:7.8px;color:#555">1.00</div>
<div class="t" style="right:1181px;top:594.10px;font-size:7.8px;color:#555">1.15</div>
<div class="t" style="left:662px;top:594.20px;font-size:7.6px;color:#555">cPON-A-202009...</div>
<div class="t" style="right:264px;top:594.10px;font-size:7.8px;color:#555">1.00</div>
<div class="t" style="right:194px;top:594.10px;font-size:7.8px;color:#555">1.00</div>
<div class="t" style="right:122px;top:594.10px;font-size:7.8px;color:#555">1.00</div>
<div class="t" style="right:53px;top:594.10px;font-size:7.8px;color:#555">1.15</div>
<svg class="a" style="left:51px;top:615px;" width="11" height="10" viewBox="0 0 11 10"><path d="M2 5 L4.5 7.5 L9 2.5" stroke="#333" stroke-width="1.1" fill="none"/></svg>
<div class="t" style="right:1722px;top:616.60px;font-size:7.8px;color:#555">2</div>
<div class="t" style="left:265.5px;top:616.60px;font-size:7.8px;color:#555">Line Description</div>
<div class="t" style="right:1423px;top:616.60px;font-size:7.8px;color:#555">1.00</div>
<div class="t" style="right:1366px;top:616.60px;font-size:7.8px;color:#555">100.00</div>
<div class="t" style="right:1325px;top:616.60px;font-size:7.8px;color:#555">25.00</div>
<div class="t" style="right:1267px;top:616.60px;font-size:7.8px;color:#555">100.00</div>
<div class="t" style="right:1181px;top:616.60px;font-size:7.8px;color:#555">125.00</div>
<div class="t" style="left:662px;top:616.70px;font-size:7.6px;color:#555">cPON-A-202009...</div>
<div class="t" style="right:264px;top:616.60px;font-size:7.8px;color:#555">1.00</div>
<div class="t" style="right:194px;top:616.60px;font-size:7.8px;color:#555">100.00</div>
<div class="t" style="right:122px;top:616.60px;font-size:7.8px;color:#555">100.00</div>
<div class="t" style="right:53px;top:616.60px;font-size:7.8px;color:#555">125.00</div>
<div class="a" style="left:27px;top:751px;width:10px;height:37px;background:#f3f3f3"></div>
<div class="a" style="left:37px;top:757px;width:1799px;height:31px;background:#fff"></div>
<div class="a" style="left:1596.5px;top:766px;width:79.5px;height:22px;background:#c9c9c9;border-radius:3px 3px 0 0;overflow:hidden"><div class="a" style="left:0;top:0;width:22px;height:100%;background:#bcbcbc"></div><svg class="a" style="left:5px;top:7px" width="12" height="8"><path d="M1 1 L6 6 L11 1" stroke="#f0f0f0" stroke-width="1.2" fill="none"/></svg></div>
<div class="t" style="left:1626.5px;top:773.70px;font-size:7.6px;color:#f4f4f4">Alternatives</div>
<div class="a" style="left:1681px;top:766px;width:67px;height:22px;background:#c9c9c9;border-radius:3px 3px 0 0;overflow:hidden"><div class="a" style="left:0;top:0;width:22px;height:100%;background:#bcbcbc"></div><svg class="a" style="left:5px;top:6px" width="12" height="10"><path d="M1 2 Q1 6 5 6 H10 M8 3.5 L10.5 6 L8 8.5" stroke="#f0f0f0" stroke-width="1.1" fill="none"/></svg></div>
<div class="t" style="left:1711px;top:773.70px;font-size:7.6px;color:#f4f4f4">Forward</div>
<div class="a" style="left:1753.5px;top:766px;width:58.5px;height:22px;background:#c9c9c9;border-radius:3px 3px 0 0;overflow:hidden"><div class="a" style="left:0;top:0;width:22px;height:100%;background:#bcbcbc"></div><svg class="a" style="left:6px;top:6px" width="10" height="10"><path d="M1 1 L9 9 M9 1 L1 9" stroke="#f0f0f0" stroke-width="1.3"/></svg></div>
<div class="t" style="left:1783.5px;top:773.70px;font-size:7.6px;color:#f4f4f4">Reject</div>
<div class="a" style="left:1817.5px;top:766px;width:18.5px;height:22px;background:#6fcaa6;border-radius:3px 0 0 0"><svg class="a" style="left:3px;top:6px" width="14" height="10"><path d="M1 5 L5 9 L13 1" stroke="#fff" stroke-width="1.5" fill="none"/></svg></div>
<div class="a" style="left:323px;top:373px;width:1513px;height:135px;background:#fff"></div>
<div class="a" style="left:326px;top:508px;width:1510px;height:20px;background:#fff"></div>
<div class="a" style="left:372px;top:373px;width:1px;height:155px;background:#efefef"></div>
<div class="a" style="left:421px;top:373px;width:1px;height:155px;background:#efefef"></div>
<div class="a" style="left:465px;top:373px;width:1px;height:155px;background:#efefef"></div>
<div class="a" style="left:517px;top:373px;width:1px;height:155px;background:#efefef"></div>
<div class="a" style="left:603px;top:373px;width:1px;height:155px;background:#efefef"></div>
<div class="a" style="left:674px;top:373px;width:1px;height:155px;background:#efefef"></div>
<div class="a" style="left:776px;top:373px;width:1px;height:155px;background:#efefef"></div>
<div class="a" style="left:829px;top:373px;width:1px;height:155px;background:#efefef"></div>
<div class="a" style="left:888px;top:373px;width:1px;height:155px;background:#efefef"></div>
<div class="a" style="left:945px;top:373px;width:1px;height:155px;background:#efefef"></div>
<div class="a" style="left:999px;top:373px;width:1px;height:155px;background:#efefef"></div>
<div class="a" style="left:1050px;top:373px;width:1px;height:155px;background:#efefef"></div>
<div class="a" style="left:1102px;top:373px;width:1px;height:155px;background:#efefef"></div>
<div class="a" style="left:1164px;top:373px;width:1px;height:155px;background:#efefef"></div>
<div class="a" style="left:1202px;top:373px;width:1px;height:155px;background:#efefef"></div>
<div class="a" style="left:1257px;top:373px;width:1px;height:155px;background:#efefef"></div>
<div class="a" style="left:1346px;top:373px;width:1px;height:155px;background:#efefef"></div>
<div class="a" style="left:1415px;top:373px;width:1px;height:155px;background:#efefef"></div>
<div class="a" style="left:1514px;top:373px;width:1px;height:155px;background:#efefef"></div>
<div class="a" style="left:1611px;top:373px;width:1px;height:155px;background:#efefef"></div>
<div class="a" style="left:1711px;top:373px;width:1px;height:155px;background:#efefef"></div>
<div class="a" style="left:1788px;top:373px;width:1px;height:155px;background:#efefef"></div>
<div class="a" style="left:371px;top:373px;width:1px;height:155px;background:#e2e2e2"></div>
<div class="a" style="left:325px;top:528px;width:1511px;height:1px;background:#dedede"></div>
<div class="a" style="left:325px;top:191px;width:1px;height:317px;background:#f0f0f0"></div>
<div class="a" style="left:572.7px;top:98.8px;width:128.29999999999995px;height:31.200000000000003px;background:#3f7be9;box-shadow:0 1px 2px rgba(0,0,0,0.35);border-radius:2px"></div>
<div class="t" style="left:336.85px;width:600px;text-align:center;top:109.90px;font-size:11px;color:#fff;letter-spacing:0.27px;-webkit-text-stroke:0.5px #fff;text-shadow:0 0 1px rgba(0,0,40,0.25)">Currently Selected PO</div>
<div class="a" style="left:1083px;top:157px;width:63px;height:31px;background:#3f7be9;box-shadow:0 1px 2px rgba(0,0,0,0.35);border-radius:2px"></div>
<div class="t" style="left:814.5px;width:600px;text-align:center;top:167.85px;font-size:11.3px;color:#fff;letter-spacing:0px;-webkit-text-stroke:0.5px #fff;text-shadow:0 0 1px rgba(0,0,40,0.25)">PO Lines</div>
<div class="a" style="left:164px;top:321px;width:86px;height:31.69999999999999px;background:#3f7be9;box-shadow:0 1px 2px rgba(0,0,0,0.35);border-radius:2px"></div>
<div class="t" style="left:-93.0px;width:600px;text-align:center;top:332.45px;font-size:10.8px;color:#fff;letter-spacing:0.12px;-webkit-text-stroke:0.5px #fff;text-shadow:0 0 1px rgba(0,0,40,0.25)">Available POs</div>
<div class="a" style="left:246px;top:639px;width:143px;height:32px;background:#3f7be9;box-shadow:0 1px 2px rgba(0,0,0,0.35);border-radius:2px"></div>
<div class="t" style="left:17.5px;width:600px;text-align:center;top:650.50px;font-size:11px;color:#fff;letter-spacing:0.1px;-webkit-text-stroke:0.5px #fff;text-shadow:0 0 1px rgba(0,0,40,0.25)">Selected PO Invoice Line</div>
<svg class="a" style="left:460px;top:120px;" width="160" height="50" viewBox="0 0 160 50"><line x1="147" y1="9.3" x2="20" y2="40" stroke="#3d76e0" stroke-width="2.4"/><path d="M13.7 42.2 L23.5 36.8 L25.5 43.6 Z" fill="#3d76e0" stroke="#3d76e0" stroke-width="1.5" stroke-linejoin="round"/></svg>
<div class="a" style="left:727.5px;top:611px;width:97.5px;height:21px;background:#fff;border:1px solid #2f5fb8"></div>
<svg class="a" style="left:812px;top:618px;" width="8" height="6" viewBox="0 0 8 6"><path d="M1 4.5 L4 1.5 L7 4.5 Z" fill="#555"/></svg>
<div class="t" style="left:1144px;top:570.10px;font-size:8.2px;color:#505050;-webkit-text-stroke:0.2px #505050">Invoiced</div>
<div class="a" style="left:728.5px;top:440px;width:430.5px;height:172px;background:#fbfbfb;box-shadow:0 1px 4px rgba(0,0,0,0.18)"></div>
<div class="a" style="left:733px;top:570px;width:417px;height:18px;background:#e2ebf7"></div>
<div class="t" style="right:1031px;top:449.85px;font-size:7.9px;color:#555;-webkit-text-stroke:0.2px #555">PO Line</div>
<div class="t" style="left:812.7px;top:449.85px;font-size:7.9px;color:#555;-webkit-text-stroke:0.2px #555">IL Description</div>
<div class="t" style="right:815px;top:449.85px;font-size:7.9px;color:#555;-webkit-text-stroke:0.2px #555">Available</div>
<div class="t" style="left:1029px;top:449.85px;font-size:7.9px;color:#555;-webkit-text-stroke:0.2px #555">Last received</div>
<div class="t" style="right:684px;top:449.85px;font-size:7.9px;color:#555;-webkit-text-stroke:0.2px #555">Quality</div>
<div class="t" style="right:1031px;top:467.60px;font-size:7.8px;color:#555">4</div>
<div class="t" style="left:812.7px;top:467.60px;font-size:7.8px;color:#555">Line Description</div>
<div class="t" style="right:815px;top:467.60px;font-size:7.8px;color:#555">1</div>
<div class="a" style="left:1119px;top:467px;width:9px;height:9px;border:1px solid #bbb;border-radius:50%;background:#fff"></div>
<div class="a" style="left:1131px;top:467.5px;width:17px;height:9px;overflow:hidden"><div class="t" style="left:0;top:0;font-size:7.7px;color:#666">75,0%</div></div>
<div class="t" style="right:1031px;top:485.55px;font-size:7.8px;color:#555">5</div>
<div class="t" style="left:812.7px;top:485.55px;font-size:7.8px;color:#555">Line Description</div>
<div class="t" style="right:815px;top:485.55px;font-size:7.8px;color:#555">1</div>
<div class="a" style="left:1119px;top:485px;width:9px;height:9px;border:1px solid #bbb;border-radius:50%;background:#fff"></div>
<div class="a" style="left:1131px;top:485.4px;width:17px;height:9px;overflow:hidden"><div class="t" style="left:0;top:0;font-size:7.7px;color:#666">75,0%</div></div>
<div class="t" style="right:1031px;top:503.50px;font-size:7.8px;color:#555">6</div>
<div class="t" style="left:812.7px;top:503.50px;font-size:7.8px;color:#555">Line Description</div>
<div class="t" style="right:815px;top:503.50px;font-size:7.8px;color:#555">1</div>
<div class="a" style="left:1119px;top:503px;width:9px;height:9px;border:1px solid #bbb;border-radius:50%;background:#fff"></div>
<div class="a" style="left:1131px;top:503.4px;width:17px;height:9px;overflow:hidden"><div class="t" style="left:0;top:0;font-size:7.7px;color:#666">75,0%</div></div>
<div class="t" style="right:1031px;top:521.45px;font-size:7.8px;color:#555">7</div>
<div class="t" style="left:812.7px;top:521.45px;font-size:7.8px;color:#555">Line Description</div>
<div class="t" style="right:815px;top:521.45px;font-size:7.8px;color:#555">1</div>
<div class="a" style="left:1119px;top:521px;width:9px;height:9px;border:1px solid #bbb;border-radius:50%;background:#fff"></div>
<div class="a" style="left:1131px;top:521.4px;width:17px;height:9px;overflow:hidden"><div class="t" style="left:0;top:0;font-size:7.7px;color:#666">75,0%</div></div>
<div class="t" style="right:1031px;top:539.40px;font-size:7.8px;color:#555">3</div>
<div class="t" style="left:812.7px;top:539.40px;font-size:7.8px;color:#555">Line Description</div>
<div class="t" style="right:815px;top:539.40px;font-size:7.8px;color:#555">1</div>
<div class="a" style="left:1119px;top:539px;width:9px;height:9px;border:1px solid #bbb;border-radius:50%;background:#fff"></div>
<div class="a" style="left:1131px;top:539.3px;width:17px;height:9px;overflow:hidden"><div class="t" style="left:0;top:0;font-size:7.7px;color:#666">50,0%</div></div>
<div class="t" style="right:1031px;top:557.35px;font-size:7.8px;color:#555">2</div>
<div class="t" style="left:812.7px;top:557.35px;font-size:7.8px;color:#555">Line Description - NoMatch</div>
<div class="t" style="right:815px;top:557.35px;font-size:7.8px;color:#555">1</div>
<div class="a" style="left:1119px;top:557px;width:9px;height:9px;border:1px solid #bbb;border-radius:50%;background:#fff"></div>
<div class="a" style="left:1131px;top:557.2px;width:17px;height:9px;overflow:hidden"><div class="t" style="left:0;top:0;font-size:7.7px;color:#666">37,5%</div></div>
<div class="t" style="right:1031px;top:575.30px;font-size:7.8px;color:#555">1</div>
<div class="t" style="left:812.7px;top:575.30px;font-size:7.8px;color:#555">Line Description - NoMatch</div>
<div class="t" style="right:815px;top:575.30px;font-size:7.8px;color:#555">1</div>
<div class="a" style="left:1119px;top:575px;width:9px;height:9px;border:1px solid #bbb;border-radius:50%;background:#fff"></div>
<div class="a" style="left:1131px;top:575.2px;width:17px;height:9px;overflow:hidden"><div class="t" style="left:0;top:0;font-size:7.7px;color:#666">12,5%</div></div>
<div class="a" style="left:1148.5px;top:463px;width:5.5px;height:138px;background:#cbcbcb;border-radius:1px"></div>
<div class="a" style="left:917px;top:590px;width:54px;height:17.5px;background:#f1f1f1;border-radius:2px"></div>
<div class="t" style="left:644px;width:600px;text-align:center;top:595.40px;font-size:7.2px;color:#ddd">Show more</div>
<div class="a" style="left:711.8px;top:426.3px;width:463.2px;height:221px;background:rgba(60,110,230,0.18);border:2px solid #3b72e6;border-radius:2px"></div>
<div class="a" style="left:852.8px;top:383px;width:177.79999999999995px;height:48.39999999999998px;background:#3f7be9;box-shadow:0 1px 2px rgba(0,0,0,0.35);border-radius:2px"></div>
<div class="t" style="left:641.6999999999999px;width:600px;text-align:center;top:396.05px;font-size:10.6px;color:#fff;letter-spacing:0.12px;-webkit-text-stroke:0.5px #fff;text-shadow:0 0 1px rgba(0,0,40,0.25)">Possible matching PO Lines</div>
<div class="t" style="left:641.6999999999999px;width:600px;text-align:center;top:408.55px;font-size:10.6px;color:#fff;letter-spacing:0.12px;-webkit-text-stroke:0.5px #fff;text-shadow:0 0 1px rgba(0,0,40,0.25)">sorted by matching quality</div>
<svg class="a" style="left:1094px;top:580px;" width="12" height="16" viewBox="0 0 12 16"><path d="M4 1.5 V8 M4 1.5 Q5 0.5 6 1.5 V7 M6 5 Q7 4 8 5 V7.5 M8 6 Q9 5 10 6 V11 Q10 14 7 14.5 H5 Q3 14 2 11 L1 8.5 Q1 7.5 2 7.5 L4 9" stroke="#222" stroke-width="0.9" fill="#fff"/></svg></body></html>
